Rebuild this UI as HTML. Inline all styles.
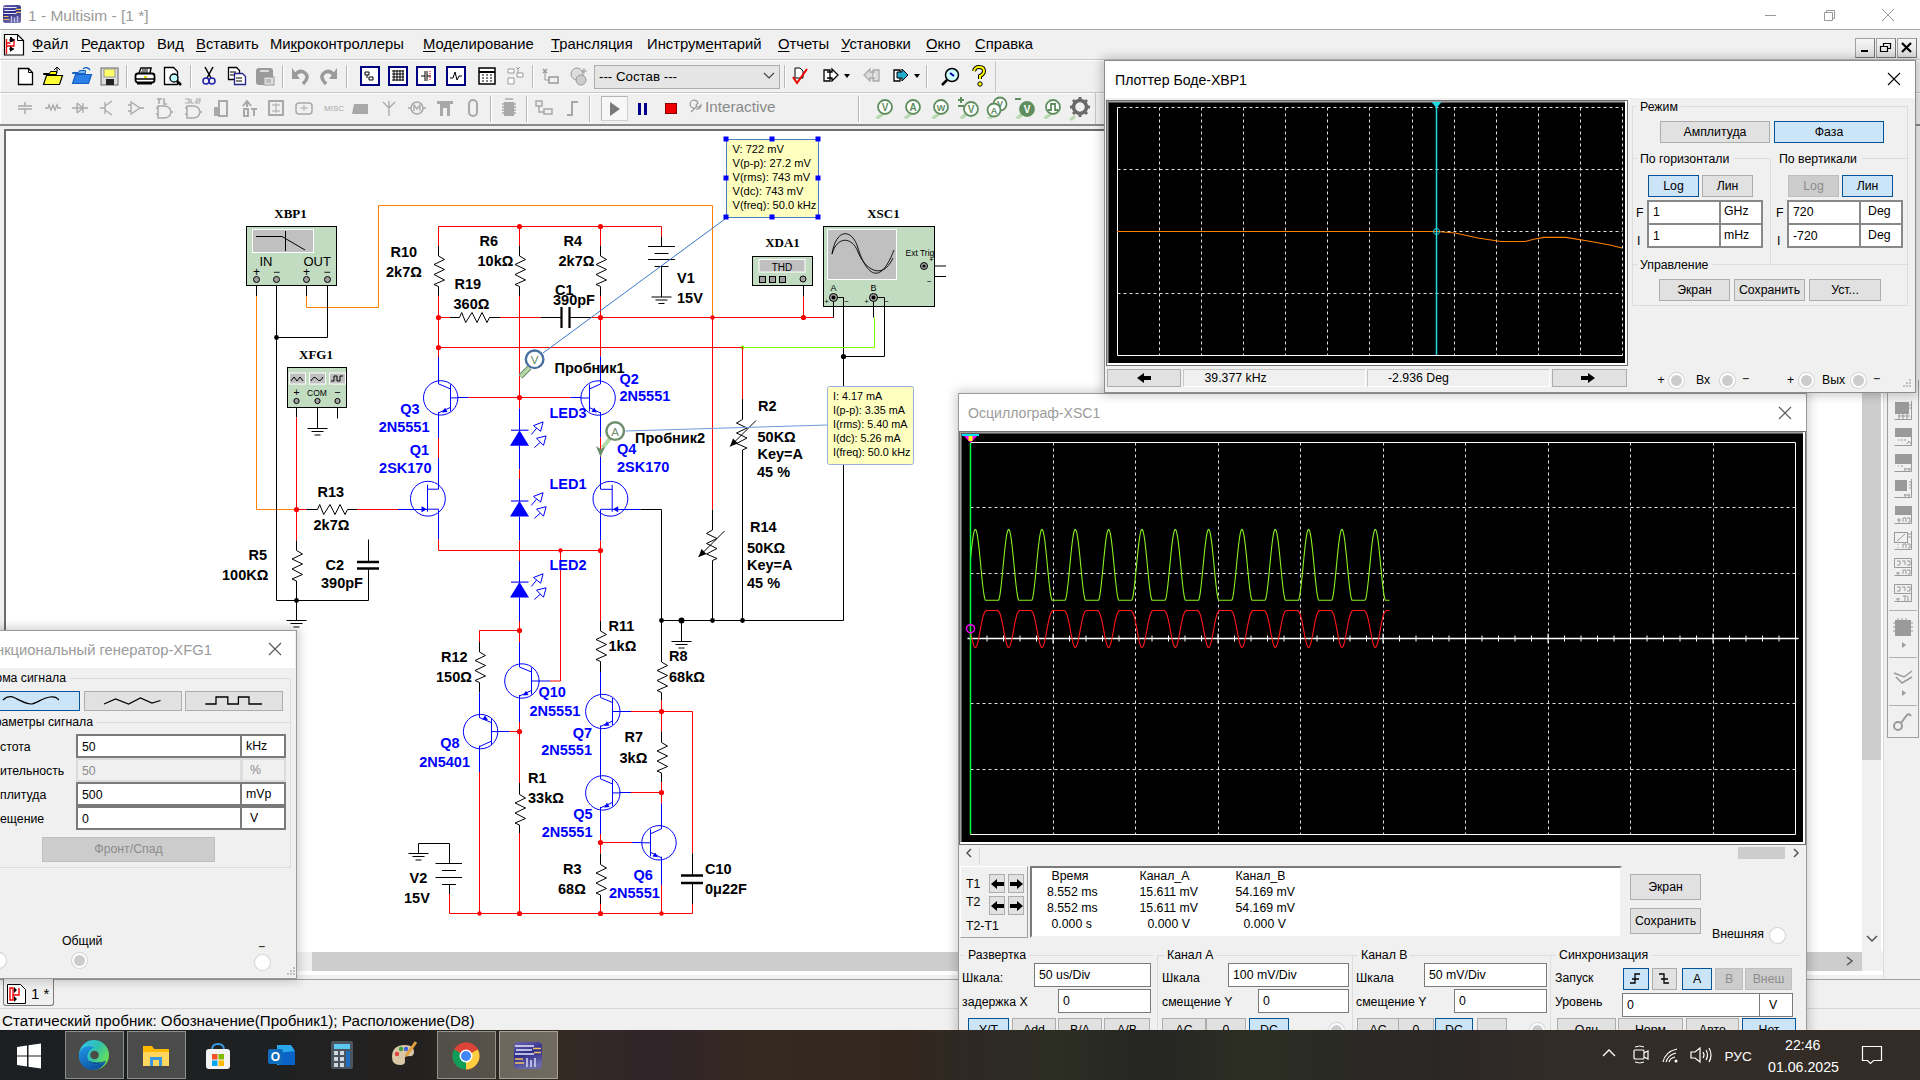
<!DOCTYPE html>
<html><head><meta charset="utf-8">
<style>
*{box-sizing:border-box;margin:0;padding:0}
html,body{width:1920px;height:1080px;overflow:hidden;background:#fff;font-family:"Liberation Sans",sans-serif;color:#000}
.a{position:absolute}
svg.a{overflow:visible}
.t{position:absolute;white-space:nowrap;line-height:1}
.btn{position:absolute;background:#e1e1e1;border:1px solid #adadad}
.sel{position:absolute;background:#cce4f7;border:1px solid #005499}
.dis{position:absolute;background:#cccccc;border:1px solid #bfbfbf}
.tb{position:absolute;background:#fff;border:1px solid #7a7a7a}
.grp{position:absolute;border:1px solid #dcdcdc}
</style></head><body>
<div class="a" style="left:0px;top:0px;width:1920px;height:29px;background:#fff"></div>
<svg class="a" style="left:3px;top:5px;" width="18" height="18" viewBox="0 0 18 18"><defs><linearGradient id="ai" x1="0" y1="0" x2="0.3" y2="1"><stop offset="0" stop-color="#6a68b0"/><stop offset="0.5" stop-color="#2c2a88"/><stop offset="1" stop-color="#6a68a8"/></linearGradient></defs><rect x="0" y="0" width="18" height="18" rx="2.5" fill="url(#ai)"/><path d="M0.5 2.5h13M1.5 5.5h11M0.5 8.5h13" stroke="#e8e8f8" stroke-width="1.1"/><path d="M12.5 4.3h5.5M13 7.3h5" stroke="#f0c060" stroke-width="1.2"/><path d="M0.5 11.5h5M0.5 14.5h6" stroke="#f0c060" stroke-width="1.2"/><path d="M8.5 11v6.5M11.5 12.5v5M14.5 11v6.5" stroke="#c0c0e8" stroke-width="1.3"/></svg>
<div class="t" style="left:28.00px;top:7.90px;font-size:15.5px;color:#9a9a9a">1 - Multisim - [1 *]</div>
<svg class="a" style="left:1761px;top:8px;" width="20" height="14" viewBox="0 0 20 14"><path d="M4 7.5h11" stroke="#999" stroke-width="1"/></svg>
<svg class="a" style="left:1820px;top:6px;" width="18" height="18" viewBox="0 0 18 18"><path d="M4.5 6.5h8v8h-8z M6.5 6.5v-2h8v8h-2" fill="none" stroke="#999" stroke-width="1"/></svg>
<svg class="a" style="left:1879px;top:6px;" width="18" height="18" viewBox="0 0 18 18"><path d="M3 3l12 12M15 3l-12 12" stroke="#999" stroke-width="1"/></svg>
<div class="a" style="left:0px;top:29px;width:1920px;height:1px;background:#a8a8a8"></div>
<div class="a" style="left:0px;top:30px;width:1920px;height:96px;background:#f0f0f0"></div>
<div class="a" style="left:0px;top:30px;width:1px;height:94px;background:#fff"></div>
<div class="a" style="left:0px;top:59px;width:1920px;height:1px;background:#c6c6c6"></div>
<div class="a" style="left:0px;top:60px;width:1920px;height:1px;background:#fff"></div>
<div class="a" style="left:0px;top:92px;width:1920px;height:1px;background:#c6c6c6"></div>
<div class="a" style="left:0px;top:93px;width:1920px;height:1px;background:#fff"></div>
<div class="a" style="left:0px;top:124px;width:1920px;height:2px;background:#8a8a8a"></div>
<svg class="a" style="left:4px;top:34px;" width="21" height="22" viewBox="0 0 21 22"><path d="M0.5 0.5h13l6 6v14.5h-19z" fill="#fff" stroke="#000" stroke-width="1.2"/><path d="M13.5 0.5v6h6" fill="none" stroke="#000"/><path d="M2.5 5v15M2.5 9h4M10 5v7h-7" fill="none" stroke="#e00" stroke-width="1.3"/><path d="M6 3h2v5h-2zM8 4l3 2-3 2zM6 12l4 3-4 3z" fill="#000"/><path d="M5 6h3M10 15h-5" stroke="#000"/></svg>
<div class="t" style="left:32.00px;top:37.49px;font-size:14.8px;text-underline-offset:2px"><u>Ф</u>айл</div>
<div class="t" style="left:81.00px;top:37.49px;font-size:14.8px;text-underline-offset:2px"><u>Р</u>едактор</div>
<div class="t" style="left:157.00px;top:37.49px;font-size:14.8px;text-underline-offset:2px">Вид</div>
<div class="t" style="left:196.00px;top:37.49px;font-size:14.8px;text-underline-offset:2px"><u>В</u>ставить</div>
<div class="t" style="left:270.00px;top:37.49px;font-size:14.8px;text-underline-offset:2px">Ми<u>к</u>роконтроллеры</div>
<div class="t" style="left:423.00px;top:37.49px;font-size:14.8px;text-underline-offset:2px"><u>М</u>оделирование</div>
<div class="t" style="left:551.00px;top:37.49px;font-size:14.8px;text-underline-offset:2px"><u>Т</u>рансляция</div>
<div class="t" style="left:647.00px;top:37.49px;font-size:14.8px;text-underline-offset:2px">Инструм<u>е</u>нтарий</div>
<div class="t" style="left:778.00px;top:37.49px;font-size:14.8px;text-underline-offset:2px"><u>О</u>тчеты</div>
<div class="t" style="left:841.00px;top:37.49px;font-size:14.8px;text-underline-offset:2px"><u>У</u>становки</div>
<div class="t" style="left:926.00px;top:37.49px;font-size:14.8px;text-underline-offset:2px"><u>О</u>кно</div>
<div class="t" style="left:975.00px;top:37.49px;font-size:14.8px;text-underline-offset:2px"><u>С</u>правка</div>
<div class="a" style="left:1855px;top:38px;width:20px;height:20px;background:linear-gradient(#f6f6f6,#e0e0e0);border:1px solid #a0a0a0;border-right-color:#777;border-bottom-color:#777"></div>
<svg class="a" style="left:1855px;top:38px;" width="20" height="20" viewBox="0 0 20 20"><path d="M6 13h7" stroke="#000" stroke-width="2"/></svg>
<div class="a" style="left:1876px;top:38px;width:20px;height:20px;background:linear-gradient(#f6f6f6,#e0e0e0);border:1px solid #a0a0a0;border-right-color:#777;border-bottom-color:#777"></div>
<svg class="a" style="left:1876px;top:38px;" width="20" height="20" viewBox="0 0 20 20"><path d="M4.5 8.5h7v5h-7z M7.5 8.5v-3h7v5h-3" fill="none" stroke="#000" stroke-width="1.2"/></svg>
<div class="a" style="left:1897px;top:38px;width:20px;height:20px;background:linear-gradient(#f6f6f6,#e0e0e0);border:1px solid #a0a0a0;border-right-color:#777;border-bottom-color:#777"></div>
<svg class="a" style="left:1897px;top:38px;" width="20" height="20" viewBox="0 0 20 20"><path d="M5 5l9 9M14 5l-9 9" stroke="#000" stroke-width="2.2"/></svg>
<svg class="a" style="left:17px;top:67px;" width="18" height="19" viewBox="0 0 18 19"><path d="M1.5 1.5h10l4 4v12h-14z" fill="#fff" stroke="#000" stroke-width="1.3"/><path d="M11.5 1.5v4h4" fill="none" stroke="#000"/></svg>
<svg class="a" style="left:42px;top:66px;" width="22" height="20" viewBox="0 0 22 20"><path d="M1.5 7.5h6l1 -2h6v3h-13z" fill="#ff0" stroke="#000"/><path d="M1.5 18.5l3-9h16l-3 9z" fill="#ff3" stroke="#000" stroke-width="1.2"/><path d="M12 4l3-3 3 3M15 1v6" stroke="#000" fill="none"/></svg>
<svg class="a" style="left:71px;top:66px;" width="22" height="20" viewBox="0 0 22 20"><path d="M1.5 6.5h6l1-2h6v3h-13z" fill="#7ab4f5" stroke="#1560c0"/><path d="M1.5 17.5l3-9h16l-3 9z" fill="#2a7fe8" stroke="#1560c0" stroke-width="1.2"/><path d="M12 3q4-3 7 1" stroke="#1560c0" fill="none" stroke-width="1.3"/></svg>
<svg class="a" style="left:100px;top:67px;" width="19" height="19" viewBox="0 0 19 19"><rect x="1" y="1" width="17" height="17" fill="#ddd" stroke="#666"/><rect x="4" y="2" width="11" height="8" fill="#ff6" stroke="#999"/><rect x="6" y="12" width="8" height="6" fill="#222"/></svg>
<div class="a" style="left:126px;top:65px;width:1px;height:23px;background:#b8b8b8"></div>
<div class="a" style="left:127px;top:65px;width:1px;height:23px;background:#fff"></div>
<svg class="a" style="left:134px;top:66px;" width="22" height="20" viewBox="0 0 22 20"><path d="M5 7l2-5h10l-1 5" fill="#fff" stroke="#000" stroke-width="1.5"/><path d="M8 4h6M7 6h7" stroke="#000"/><rect x="1.5" y="7.5" width="19" height="9" rx="2.5" fill="#fff" stroke="#000" stroke-width="1.8"/><path d="M2 13h18" stroke="#000" stroke-width="1.5"/><rect x="10" y="10" width="3" height="2" fill="#dd0"/><rect x="3" y="16" width="15" height="2.5" fill="#000"/></svg>
<svg class="a" style="left:163px;top:66px;" width="20" height="21" viewBox="0 0 20 21"><path d="M1.5 1.5h9l4 4v13h-13z" fill="#fff" stroke="#000" stroke-width="1.3"/><circle cx="11" cy="12" r="4" fill="#bff" stroke="#000" stroke-width="1.3"/><path d="M14 15l4 4" stroke="#000" stroke-width="2.5"/></svg>
<div class="a" style="left:190px;top:65px;width:1px;height:23px;background:#b8b8b8"></div>
<div class="a" style="left:191px;top:65px;width:1px;height:23px;background:#fff"></div>
<svg class="a" style="left:202px;top:66px;" width="14" height="20" viewBox="0 0 14 20"><path d="M3 1l6 11M11 1l-6 11" stroke="#000" stroke-width="1.5"/><circle cx="4" cy="15" r="3" fill="none" stroke="#22a" stroke-width="1.5"/><circle cx="10" cy="15" r="3" fill="none" stroke="#22a" stroke-width="1.5"/></svg>
<svg class="a" style="left:227px;top:66px;" width="20" height="20" viewBox="0 0 20 20"><path d="M1.5 1.5h8l3 3v9h-11z" fill="#fff" stroke="#000" stroke-width="1.3"/><path d="M7.5 7.5h8l3 3v8h-11z" fill="#fff" stroke="#228" stroke-width="1.3"/><path d="M3 6h6M3 9h4M9 12h6M9 15h6" stroke="#000"/></svg>
<svg class="a" style="left:255px;top:66px;" width="20" height="20" viewBox="0 0 20 20"><rect x="1" y="2" width="17" height="17" rx="3" fill="#9a9a9a"/><rect x="5" y="4" width="9" height="2" fill="#ddd"/><rect x="9" y="11" width="10" height="8" fill="#ddd" stroke="#9a9a9a"/><path d="M11 14h5M11 16h5" stroke="#9a9a9a"/></svg>
<div class="a" style="left:282px;top:65px;width:1px;height:23px;background:#b8b8b8"></div>
<div class="a" style="left:283px;top:65px;width:1px;height:23px;background:#fff"></div>
<svg class="a" style="left:290px;top:67px;" width="20" height="18" viewBox="0 0 20 18"><path d="M2 1v11h8z" fill="#9a9a9a"/><path d="M5 8q5-6 10-2t-2 11" fill="none" stroke="#9a9a9a" stroke-width="3.5"/></svg>
<svg class="a" style="left:319px;top:67px;" width="20" height="18" viewBox="0 0 20 18"><path d="M18 1v11h-8z" fill="#9a9a9a"/><path d="M15 8q-5-6-10-2t2 11" fill="none" stroke="#9a9a9a" stroke-width="3.5"/></svg>
<div class="a" style="left:346px;top:65px;width:1px;height:23px;background:#b8b8b8"></div>
<div class="a" style="left:347px;top:65px;width:1px;height:23px;background:#fff"></div>
<svg class="a" style="left:360px;top:66px;" width="20" height="20" viewBox="0 0 20 20"><rect x="1" y="1" width="18" height="18" fill="#fff" stroke="#000080" stroke-width="2"/><path d="M5 6h4v3h-4zM9 11h4v3h-4zM7 9v3" stroke="#000" fill="#fff"/></svg>
<svg class="a" style="left:388px;top:66px;" width="20" height="20" viewBox="0 0 20 20"><rect x="1" y="1" width="18" height="18" fill="#fff" stroke="#000080" stroke-width="2"/><path d="M4 5h12M4 8h12M4 11h12M4 14h12M6 4v11M9 4v11M12 4v11M15 4v11" stroke="#000"/></svg>
<svg class="a" style="left:416px;top:66px;" width="20" height="20" viewBox="0 0 20 20"><rect x="1" y="1" width="18" height="18" fill="#fff" stroke="#000080" stroke-width="2"/><path d="M5 10h4M11 10h4M9 5v10M11 5v10" stroke="#000"/><path d="M14 5v10" stroke="#e00" stroke-dasharray="1 1"/></svg>
<svg class="a" style="left:446px;top:66px;" width="20" height="20" viewBox="0 0 20 20"><rect x="1" y="1" width="18" height="18" fill="#fff" stroke="#000080" stroke-width="2"/><path d="M4 12h3l2-6 2 8 2-4h3" stroke="#000" fill="none"/></svg>
<svg class="a" style="left:477px;top:66px;" width="20" height="20" viewBox="0 0 20 20"><rect x="2" y="2" width="16" height="16" fill="#fff" stroke="#000" stroke-width="1.5"/><path d="M2 6h16" stroke="#000" stroke-width="2"/><path d="M5 9h2M9 9h2M13 9h2M5 12h2M9 12h2M13 12h2M5 15h2M9 15h2M13 15h2" stroke="#000"/></svg>
<svg class="a" style="left:505px;top:66px;" width="20" height="20" viewBox="0 0 20 20"><path d="M3 3h6v4h-6zM3 12h6v6h-6zM12 7h6v4h-6z" fill="#fff" stroke="#999"/><path d="M13 2v5M15 1l-2 2-2-2" stroke="#999" fill="none"/></svg>
<div class="a" style="left:532px;top:65px;width:1px;height:23px;background:#b8b8b8"></div>
<div class="a" style="left:533px;top:65px;width:1px;height:23px;background:#fff"></div>
<svg class="a" style="left:540px;top:66px;" width="20" height="20" viewBox="0 0 20 20"><path d="M3 3l4 4M7 3l-4 4M9 11h9v6h-9z" stroke="#999" fill="none" stroke-width="1.5"/><path d="M5 6v8h4" stroke="#999" fill="none"/></svg>
<svg class="a" style="left:569px;top:66px;" width="20" height="20" viewBox="0 0 20 20"><circle cx="8" cy="8" r="6" fill="#ddd" stroke="#999"/><circle cx="12" cy="14" r="5" fill="#ccc" stroke="#999"/><path d="M15 2v6M12 5h6" stroke="#999"/></svg>
<div class="a" style="left:594px;top:65px;width:186px;height:24px;background:#e5e5e5;border:1px solid #adadad"></div>
<div class="t" style="left:599.00px;top:69.76px;font-size:13.3px;">--- Состав ---</div>
<svg class="a" style="left:762px;top:71px;" width="14" height="10" viewBox="0 0 14 10"><path d="M2 2l5 5 5-5" fill="none" stroke="#444" stroke-width="1.2"/></svg>
<div class="a" style="left:784px;top:65px;width:1px;height:23px;background:#b8b8b8"></div>
<div class="a" style="left:785px;top:65px;width:1px;height:23px;background:#fff"></div>
<svg class="a" style="left:791px;top:66px;" width="20" height="20" viewBox="0 0 20 20"><path d="M4 2h5l3 3v7h-8z" fill="#fff" stroke="#000"/><path d="M2 11l4 6 10-14" fill="none" stroke="#e00" stroke-width="2"/></svg>
<svg class="a" style="left:822px;top:67px;" width="18" height="18" viewBox="0 0 18 18"><path d="M2 3h6v11h-6zM5 5h5v-3l6 6-6 6v-3h-5" fill="#fff" stroke="#000" stroke-width="1.3"/></svg>
<svg class="a" style="left:843px;top:73px;" width="8" height="6" viewBox="0 0 8 6"><path d="M1 1h6l-3 4z" fill="#000"/></svg>
<svg class="a" style="left:863px;top:67px;" width="18" height="18" viewBox="0 0 18 18"><path d="M10 3h6v11h-6zM12 5h-5v-3l-6 6 6 6v-3h5" fill="#ddd" stroke="#aaa" stroke-width="1.3"/></svg>
<svg class="a" style="left:892px;top:67px;" width="18" height="18" viewBox="0 0 18 18"><path d="M2 3h6v11h-6z" fill="#fff" stroke="#000" stroke-width="1.3"/><path d="M5 5h5v-3l6 6-6 6v-3h-5z" fill="#2ac" stroke="#000" stroke-width="1"/></svg>
<svg class="a" style="left:913px;top:73px;" width="8" height="6" viewBox="0 0 8 6"><path d="M1 1h6l-3 4z" fill="#000"/></svg>
<div class="a" style="left:926px;top:65px;width:1px;height:23px;background:#b8b8b8"></div>
<div class="a" style="left:927px;top:65px;width:1px;height:23px;background:#fff"></div>
<svg class="a" style="left:940px;top:66px;" width="22" height="21" viewBox="0 0 22 21"><circle cx="12" cy="9" r="6.5" fill="#cff" stroke="#000" stroke-width="1.5"/><path d="M7 14l-5 5" stroke="#000" stroke-width="2.5"/><path d="M10 7l4 3" stroke="#00a" stroke-width="2"/></svg>
<svg class="a" style="left:970px;top:65px;" width="18" height="23" viewBox="0 0 18 23"><path d="M4 6q1-4 5-4 5 0 5 4 0 3-4 5v3" fill="none" stroke="#000" stroke-width="4"/><path d="M4 6q1-4 5-4 5 0 5 4 0 3-4 5v3" fill="none" stroke="#ff0" stroke-width="2"/><circle cx="10" cy="19" r="2.2" fill="#ff0" stroke="#000"/></svg>
<div class="a" style="left:995px;top:61px;width:1px;height:31px;background:#c8c8c8"></div>
<svg class="a" style="left:15px;top:98px;" width="20" height="20" viewBox="0 0 20 20"><path d="M3 8h14M3 11h14M10 4v4M10 11v5" stroke="#a8a8a8" stroke-width="1.5"/></svg>
<svg class="a" style="left:43px;top:98px;" width="20" height="20" viewBox="0 0 20 20"><path d="M2 10h3l1-3 2 5 2-5 2 5 2-5 1 3h3" stroke="#a8a8a8" fill="none" stroke-width="1.3"/></svg>
<svg class="a" style="left:70px;top:98px;" width="20" height="20" viewBox="0 0 20 20"><path d="M2 10h16M7 5v10M7 5l6 5-6 5M13 5v10" stroke="#a8a8a8" fill="none" stroke-width="1.3"/></svg>
<svg class="a" style="left:98px;top:98px;" width="20" height="20" viewBox="0 0 20 20"><path d="M7 4v12M7 8l7-5M7 12l7 5M2 10h5" stroke="#a8a8a8" fill="none" stroke-width="1.3"/></svg>
<svg class="a" style="left:126px;top:98px;" width="20" height="20" viewBox="0 0 20 20"><path d="M5 4v12l9-6zM2 7h3M2 13h3M14 10h4" stroke="#a8a8a8" fill="none" stroke-width="1.3"/></svg>
<svg class="a" style="left:154px;top:98px;" width="20" height="20" viewBox="0 0 20 20"><path d="M4 8h6q6 0 7 6q-1 6-7 6h-6zM2 10h2M2 16h2M17 14h2" stroke="#a8a8a8" fill="none" stroke-width="1.5"/><path d="M3 1h5M5 1v5M9 1h1v5h3" stroke="#a8a8a8" stroke-width="1.5" fill="none"/></svg>
<svg class="a" style="left:183px;top:98px;" width="20" height="20" viewBox="0 0 20 20"><path d="M4 8h6q6 0 7 6q-1 6-7 6h-6zM2 10h2M2 16h2M17 14h2" stroke="#a8a8a8" fill="none" stroke-width="1.5"/><path d="M2 1h4v4h-4M8 1v4h3M13 1h4v2h-4v2h4" stroke="#a8a8a8" stroke-width="1.2" fill="none"/></svg>
<svg class="a" style="left:211px;top:98px;" width="20" height="20" viewBox="0 0 20 20"><rect x="3" y="9" width="4" height="9" fill="#a8a8a8"/><rect x="8" y="3" width="8" height="15" fill="none" stroke="#a8a8a8" stroke-width="2"/></svg>
<svg class="a" style="left:239px;top:98px;" width="20" height="20" viewBox="0 0 20 20"><path d="M4 8l4-5 4 5M8 3v6M5 11h4v7h-4zM12 11h6M15 11v7" stroke="#a8a8a8" fill="none" stroke-width="2"/></svg>
<svg class="a" style="left:266px;top:98px;" width="20" height="20" viewBox="0 0 20 20"><rect x="3" y="3" width="14" height="14" fill="none" stroke="#a8a8a8" stroke-width="2"/><path d="M6 7h8M6 13h8M10 5v10" stroke="#a8a8a8"/></svg>
<svg class="a" style="left:294px;top:98px;" width="20" height="20" viewBox="0 0 20 20"><rect x="2" y="5" width="16" height="11" rx="3" fill="none" stroke="#a8a8a8" stroke-width="1.5"/><path d="M6 10h8M10 7v6" stroke="#a8a8a8"/></svg>
<svg class="a" style="left:323px;top:98px;" width="20" height="20" viewBox="0 0 20 20"><text x="1" y="13" font-size="8" font-family="Liberation Sans" fill="#a8a8a8">MISC</text></svg>
<svg class="a" style="left:351px;top:98px;" width="20" height="20" viewBox="0 0 20 20"><path d="M3 6h14v10h-16z" fill="#a8a8a8"/></svg>
<svg class="a" style="left:379px;top:98px;" width="20" height="20" viewBox="0 0 20 20"><path d="M10 3v15M4 4l6 6 6-6" stroke="#a8a8a8" fill="none" stroke-width="1.3"/></svg>
<svg class="a" style="left:407px;top:98px;" width="20" height="20" viewBox="0 0 20 20"><circle cx="10" cy="10" r="6" fill="none" stroke="#a8a8a8" stroke-width="1.5"/><path d="M1 10h3M16 10h3M7 13v-6l3 4 3-4v6" stroke="#a8a8a8" fill="none" stroke-width="1.3"/></svg>
<svg class="a" style="left:435px;top:98px;" width="20" height="20" viewBox="0 0 20 20"><path d="M2 3h16v3h-3v12h-3v-8h-4v8h-3v-12h-3z" fill="#a8a8a8"/></svg>
<svg class="a" style="left:463px;top:98px;" width="20" height="20" viewBox="0 0 20 20"><rect x="6" y="2" width="8" height="16" rx="4" fill="none" stroke="#a8a8a8" stroke-width="2"/></svg>
<svg class="a" style="left:499px;top:98px;" width="20" height="20" viewBox="0 0 20 20"><rect x="5" y="4" width="10" height="14" fill="#a8a8a8"/><path d="M3 6h2M3 9h2M3 12h2M3 15h2M15 6h2M15 9h2M15 12h2M15 15h2M6 1h8" stroke="#a8a8a8" stroke-width="1.5"/></svg>
<svg class="a" style="left:534px;top:98px;" width="20" height="20" viewBox="0 0 20 20"><path d="M2 3h6v5h-6zM10 11h8v5h-8zM5 8v6h5" stroke="#a8a8a8" fill="none" stroke-width="1.5"/></svg>
<svg class="a" style="left:563px;top:98px;" width="20" height="20" viewBox="0 0 20 20"><path d="M4 17h5v-13h6" stroke="#a8a8a8" fill="none" stroke-width="2"/></svg>
<div class="a" style="left:490px;top:96px;width:1px;height:26px;background:#b8b8b8"></div>
<div class="a" style="left:491px;top:96px;width:1px;height:26px;background:#fff"></div>
<div class="a" style="left:526px;top:96px;width:1px;height:26px;background:#b8b8b8"></div>
<div class="a" style="left:527px;top:96px;width:1px;height:26px;background:#fff"></div>
<div class="a" style="left:589px;top:96px;width:1px;height:26px;background:#b8b8b8"></div>
<div class="a" style="left:590px;top:96px;width:1px;height:26px;background:#fff"></div>
<div class="a" style="left:601px;top:96px;width:27px;height:25px;background:#f7f7f7;border:1px solid #cfcfcf;border-top-color:#b5b5b5;border-left-color:#b5b5b5"></div>
<svg class="a" style="left:609px;top:101px;" width="12" height="16" viewBox="0 0 12 16"><path d="M1 1l10 7-10 7z" fill="#7a7a7a"/></svg>
<svg class="a" style="left:637px;top:101px;" width="12" height="16" viewBox="0 0 12 16"><rect x="1" y="2" width="3" height="12" fill="#00008a"/><rect x="7" y="2" width="3" height="12" fill="#00008a"/></svg>
<div class="a" style="left:665px;top:103px;width:12px;height:11px;background:#e00;border:1px solid #800"></div>
<svg class="a" style="left:688px;top:99px;" width="14" height="16" viewBox="0 0 14 16"><path d="M3 13l5-5M7 9a4 4 0 1 1 3 -5l-2 2 1 2 2 0 2-2a4 4 0 0 1-5 4" fill="none" stroke="#999" stroke-width="1.2"/></svg>
<div class="t" style="left:705.00px;top:99.07px;font-size:15.3px;color:#8a8a8a">Interactive</div>
<div class="a" style="left:858px;top:96px;width:1px;height:26px;background:#b8b8b8"></div>
<div class="a" style="left:859px;top:96px;width:1px;height:26px;background:#fff"></div>
<svg class="a" style="left:872px;top:94px;" width="26" height="28" viewBox="0 0 26 28"><path d="M3 24l6-5 3 2-5 4z" fill="#b8d8b0"/><circle cx="13" cy="13" r="7" fill="#fff" stroke="#5e8e5e" stroke-width="1.8"/><text x="13" y="17" text-anchor="middle" font-size="10" font-weight="bold" font-family="Liberation Sans" fill="#5e8e5e">V</text></svg>
<svg class="a" style="left:900px;top:94px;" width="26" height="28" viewBox="0 0 26 28"><path d="M3 24l6-5 3 2-5 4z" fill="#b8d8b0"/><circle cx="13" cy="13" r="7" fill="#fff" stroke="#5e8e5e" stroke-width="1.8"/><text x="13" y="17" text-anchor="middle" font-size="10" font-weight="bold" font-family="Liberation Sans" fill="#5e8e5e">A</text></svg>
<svg class="a" style="left:928px;top:94px;" width="26" height="28" viewBox="0 0 26 28"><path d="M3 24l6-5 3 2-5 4z" fill="#b8d8b0"/><circle cx="13" cy="13" r="7" fill="#fff" stroke="#5e8e5e" stroke-width="1.8"/><text x="13" y="17" text-anchor="middle" font-size="9" font-weight="bold" font-family="Liberation Sans" fill="#5e8e5e">W</text></svg>
<svg class="a" style="left:956px;top:94px;" width="26" height="28" viewBox="0 0 26 28"><path d="M3 24l6-5 3 2-5 4z" fill="#b8d8b0"/><path d="M2 6h6M5 3v6M2 12h6" stroke="#5e8e5e" stroke-width="2"/><circle cx="15" cy="15" r="7" fill="#fff" stroke="#5e8e5e" stroke-width="1.8"/><text x="15" y="19" text-anchor="middle" font-size="10" font-weight="bold" font-family="Liberation Sans" fill="#5e8e5e">V</text></svg>
<svg class="a" style="left:984px;top:94px;" width="26" height="28" viewBox="0 0 26 28"><path d="M3 24l6-5 3 2-5 4z" fill="#b8d8b0"/><circle cx="16" cy="10" r="6.5" fill="#fff" stroke="#5e8e5e" stroke-width="1.8"/><text x="16" y="13" text-anchor="middle" font-size="9" font-weight="bold" font-family="Liberation Sans" fill="#5e8e5e">V</text><circle cx="10" cy="16" r="6.5" fill="#fff" stroke="#5e8e5e" stroke-width="1.8"/><text x="10" y="20" text-anchor="middle" font-size="9" font-weight="bold" font-family="Liberation Sans" fill="#5e8e5e">A</text></svg>
<svg class="a" style="left:1012px;top:94px;" width="26" height="28" viewBox="0 0 26 28"><path d="M3 24l6-5 3 2-5 4z" fill="#b8d8b0"/><path d="M3 5h6" stroke="#5e8e5e" stroke-width="2"/><circle cx="15" cy="15" r="7" fill="#5e8e5e" stroke="#5e8e5e" stroke-width="1.8"/><text x="15" y="19" text-anchor="middle" font-size="10" font-weight="bold" font-family="Liberation Sans" fill="#fff">V</text></svg>
<svg class="a" style="left:1040px;top:94px;" width="26" height="28" viewBox="0 0 26 28"><path d="M3 24l6-5 3 2-5 4z" fill="#b8d8b0"/><circle cx="13" cy="13" r="7" fill="#fff" stroke="#5e8e5e" stroke-width="1.8"/><path d="M8 16h3v-6h4v6h3" fill="none" stroke="#5e8e5e" stroke-width="1.8"/></svg>
<svg class="a" style="left:1066px;top:95px;" width="26" height="26" viewBox="0 0 26 26"><path d="M3 24l5-4 2 2-4 4z" fill="#b8d8b0"/><circle cx="14" cy="12" r="6.5" fill="none" stroke="#6a6a6a" stroke-width="3.5"/><path d="M14 2v4M14 18v4M4 12h4M20 12h4M7 5l3 3M18 16l3 3M21 5l-3 3M10 16l-3 3" stroke="#6a6a6a" stroke-width="3"/></svg>
<div class="a" style="left:1095px;top:93px;width:1px;height:31px;background:#c8c8c8"></div>
<div class="a" style="left:0px;top:126px;width:1920px;height:854px;background:#f0f0f0"></div>
<div class="a" style="left:4px;top:129px;width:1880px;height:846px;background:#fff;border-left:2px solid #6d6d6d;border-top:2px solid #6d6d6d"></div>
<div class="a" style="left:1862px;top:131px;width:19px;height:820px;background:#f0f0f0"></div>
<div class="a" style="left:1862px;top:131px;width:19px;height:629px;background:#cdcdcd"></div>
<svg class="a" style="left:1865px;top:933px;" width="14" height="12" viewBox="0 0 14 12"><path d="M2 3l5 5 5-5" fill="none" stroke="#555" stroke-width="1.5"/></svg>
<div class="a" style="left:6px;top:952px;width:1856px;height:19px;background:#f0f0f0"></div>
<div class="a" style="left:312px;top:952px;width:1550px;height:19px;background:#cdcdcd"></div>
<svg class="a" style="left:1844px;top:955px;" width="12" height="12" viewBox="0 0 12 12"><path d="M3 2l5 4-5 4" fill="none" stroke="#555" stroke-width="1.5"/></svg>
<div class="a" style="left:1862px;top:951px;width:22px;height:20px;background:#f0f0f0"></div>
<div class="a" style="left:1883px;top:126px;width:1px;height:854px;background:#dcdcdc"></div>
<div class="a" style="left:1887px;top:380px;width:32px;height:358px;background:#f0f0f0;border:1px solid #a0a0a0;border-top:none"></div>
<svg class="a" style="left:1893px;top:401px;" width="21" height="21" viewBox="0 0 21 21"><rect x="2" y="1" width="14" height="12" fill="#9a9a9a"/><path d="M18.5 0v18.5H1.5M16 4h2M16 7h2M5 15h12M6 13v5M10 13v5M14 13v5" stroke="#9a9a9a" fill="none"/></svg>
<svg class="a" style="left:1893px;top:427px;" width="21" height="21" viewBox="0 0 21 21"><rect x="2" y="1" width="17" height="9" fill="#9a9a9a"/><path d="M18.5 10v8.5H1.5M6 12v2M9 12v2M12 12v2M14 17l2-3 2 3" stroke="#9a9a9a" fill="none"/></svg>
<svg class="a" style="left:1893px;top:453px;" width="21" height="21" viewBox="0 0 21 21"><rect x="2" y="1" width="17" height="10" fill="#9a9a9a"/><path d="M18.5 11v7.5H1.5M5 13h1M8 13h2M11 16h7M12 15v4M16 15v4" stroke="#9a9a9a" fill="none"/></svg>
<svg class="a" style="left:1893px;top:479px;" width="21" height="21" viewBox="0 0 21 21"><rect x="2" y="1" width="12" height="11" fill="#9a9a9a"/><path d="M18.5 0v18.5H1.5M16 3h2M16 6h2M16 9h2M11 16h6M12 15v4M16 15v4" stroke="#9a9a9a" fill="none"/></svg>
<svg class="a" style="left:1893px;top:505px;" width="21" height="21" viewBox="0 0 21 21"><rect x="2" y="1" width="17" height="9" fill="#9a9a9a"/><path d="M18.5 10v8.5H1.5M6 13v5M4 15h4M10 17v-4h3v4M14 13h3v4h-2" stroke="#9a9a9a" fill="none"/></svg>
<svg class="a" style="left:1893px;top:531px;" width="21" height="21" viewBox="0 0 21 21"><rect x="1.5" y="1.5" width="13" height="10" fill="none" stroke="#9a9a9a"/><path d="M4 10l8-7M18.5 0v18.5H1.5M15 3h3M15 6h3M10 17v-4h3v4M14 13h3v4h-2M5 13v1M5 16v1" stroke="#9a9a9a" fill="none"/></svg>
<svg class="a" style="left:1893px;top:557px;" width="21" height="21" viewBox="0 0 21 21"><path d="M1.5 1.5h17v9h-17zM4 4h3v4h-3M9 4h3v4M14 4h3v4h-3M18.5 10v8.5H1.5M5 15v3M3 16h4M10 17v-4h3v4M14 13h3v4h-2" stroke="#9a9a9a" fill="none"/></svg>
<svg class="a" style="left:1893px;top:583px;" width="21" height="21" viewBox="0 0 21 21"><path d="M1.5 1.5h17v9h-17zM4 4h3v4h-3M9 4h3v4M14 4h3v4h-3M18.5 10v8.5H1.5M5 15v3M3 16h4M10 13h4M12 13v5M15 13v5" stroke="#9a9a9a" fill="none"/></svg>
<div class="a" style="left:1889px;top:610px;width:28px;height:1px;background:#b0b0b0"></div>
<svg class="a" style="left:1892px;top:617px;" width="22" height="22" viewBox="0 0 22 22"><rect x="3" y="3" width="16" height="16" fill="#9a9a9a"/><path d="M1 6h2M1 10h2M1 14h2M19 6h2M19 10h2M19 14h2M6 1v2M10 1v2M14 1v2" stroke="#9a9a9a"/></svg>
<svg class="a" style="left:1900px;top:641px;" width="8" height="8" viewBox="0 0 8 8"><path d="M2 1l4 3-4 3z" fill="#9a9a9a"/></svg>
<div class="a" style="left:1889px;top:657px;width:28px;height:1px;background:#b0b0b0"></div>
<svg class="a" style="left:1892px;top:665px;" width="22" height="22" viewBox="0 0 22 22"><path d="M2 8l10 4 8-6M4 12l6 6 10-6" fill="none" stroke="#9a9a9a" stroke-width="1.5"/></svg>
<svg class="a" style="left:1900px;top:689px;" width="8" height="8" viewBox="0 0 8 8"><path d="M2 1l4 3-4 3z" fill="#9a9a9a"/></svg>
<div class="a" style="left:1889px;top:705px;width:28px;height:1px;background:#b0b0b0"></div>
<svg class="a" style="left:1892px;top:711px;" width="22" height="22" viewBox="0 0 22 22"><circle cx="6" cy="15" r="4" fill="none" stroke="#9a9a9a" stroke-width="2"/><path d="M9 12l6-8q2-2 4 1" fill="none" stroke="#9a9a9a" stroke-width="2"/></svg>
<svg class="a" style="left:1867px;top:985px;" width="18" height="18" viewBox="0 0 18 18"><rect x="2" y="5" width="10" height="9" fill="#fff" stroke="#00a" stroke-width="1.5"/><rect x="6" y="2" width="10" height="9" fill="none" stroke="#00a" stroke-width="1.5"/></svg>
<div class="a" style="left:1860px;top:1013px;width:6px;height:14px;background:#3c3"></div>
<div class="a" style="left:1868px;top:1013px;width:6px;height:14px;background:#3c3"></div>
<div class="a" style="left:1876px;top:1013px;width:6px;height:14px;background:#ddd"></div>
<div class="a" style="left:1884px;top:1013px;width:6px;height:14px;background:#ddd"></div>
<div class="a" style="left:1892px;top:1013px;width:6px;height:14px;background:#ddd"></div>
<div class="a" style="left:1900px;top:1013px;width:6px;height:14px;background:#3c3"></div>
<div class="a" style="left:1908px;top:1013px;width:6px;height:14px;background:#3c3"></div>
<svg class="a" style="left:0;top:0" width="1920" height="1080" viewBox="0 0 1920 1080"><polyline points="256.5,296 256.5,509.5 296.5,509.5" fill="none" stroke="#ff8000" stroke-width="1"/><polyline points="306.5,296 306.5,307.5 378.5,307.5 378.5,205.5 712.5,205.5 712.5,317.5" fill="none" stroke="#ff8000" stroke-width="1"/><line x1="256.5" y1="283" x2="256.5" y2="296" stroke="#000000" stroke-width="1"/><line x1="306.5" y1="283" x2="306.5" y2="296" stroke="#000000" stroke-width="1"/><polyline points="276.5,283 276.5,600.5 368.5,600.5 368.5,568.5" fill="none" stroke="#000000" stroke-width="1"/><polyline points="327.5,283 327.5,337.5 276.5,337.5" fill="none" stroke="#000000" stroke-width="1"/><circle cx="276.5" cy="337.5" r="2.4" fill="#000000"/><line x1="296.5" y1="404" x2="296.5" y2="417.5" stroke="#000000" stroke-width="1"/><line x1="317.5" y1="404" x2="317.5" y2="428.5" stroke="#000000" stroke-width="1"/><line x1="337.5" y1="404" x2="337.5" y2="418.5" stroke="#000000" stroke-width="1"/><line x1="307.5" y1="428.5" x2="327.5" y2="428.5" stroke="#000000" stroke-width="1"/><line x1="311.5" y1="431.5" x2="323.5" y2="431.5" stroke="#000000" stroke-width="1"/><line x1="314.5" y1="435.0" x2="320.5" y2="435.0" stroke="#000000" stroke-width="1"/><line x1="296.5" y1="417.5" x2="296.5" y2="540.5" stroke="#ff0000" stroke-width="1"/><line x1="296.5" y1="540.5" x2="296.5" y2="550.5" stroke="#000000" stroke-width="1"/><polyline points="296.5,550.5 302.5,554.0 292.0,559.0 302.5,564.0 292.0,569.0 302.5,574.5 292.0,579.0 296.5,581.0" fill="none" stroke="#000000" stroke-width="1"/><line x1="296.5" y1="581" x2="296.5" y2="620.5" stroke="#000000" stroke-width="1"/><circle cx="296.5" cy="600.5" r="2.4" fill="#000000"/><line x1="286.5" y1="620.5" x2="306.5" y2="620.5" stroke="#000000" stroke-width="1"/><line x1="290.5" y1="623.5" x2="302.5" y2="623.5" stroke="#000000" stroke-width="1"/><line x1="293.5" y1="627.0" x2="299.5" y2="627.0" stroke="#000000" stroke-width="1"/><line x1="368.5" y1="539.5" x2="368.5" y2="562" stroke="#000000" stroke-width="1"/><line x1="357" y1="562" x2="379" y2="562" stroke="#000000" stroke-width="2.5"/><line x1="357" y1="568.5" x2="379" y2="568.5" stroke="#000000" stroke-width="2.5"/><circle cx="296.5" cy="509.5" r="2.6" fill="#ff0000"/><line x1="296.5" y1="509.5" x2="306.5" y2="509.5" stroke="#ff0000" stroke-width="1"/><line x1="306.5" y1="509.5" x2="317.5" y2="509.5" stroke="#000000" stroke-width="1"/><polyline points="317.5,509.5 319.7,504.5 323.7,514.5 330.0,504.5 335.0,514.5 340.0,504.5 345.0,514.5 347.5,509.5" fill="none" stroke="#000000" stroke-width="1"/><line x1="347.5" y1="509.5" x2="357" y2="509.5" stroke="#000000" stroke-width="1"/><line x1="357" y1="509.5" x2="398" y2="509.5" stroke="#ff0000" stroke-width="1"/><line x1="398" y1="509.5" x2="427.4" y2="509.5" stroke="#0000ff" stroke-width="1"/><polyline points="438.5,246 438.5,226.5 661.5,226.5 661.5,237" fill="none" stroke="#ff0000" stroke-width="1"/><line x1="661.5" y1="237" x2="661.5" y2="246.5" stroke="#000000" stroke-width="1"/><circle cx="519.5" cy="226.5" r="2.6" fill="#ff0000"/><circle cx="600.5" cy="226.5" r="2.6" fill="#ff0000"/><line x1="519.5" y1="226.5" x2="519.5" y2="246" stroke="#ff0000" stroke-width="1"/><line x1="600.5" y1="226.5" x2="600.5" y2="246" stroke="#ff0000" stroke-width="1"/><line x1="438.5" y1="246" x2="438.5" y2="256" stroke="#000000" stroke-width="1"/><polyline points="438.5,256 444.5,259.5 434.0,264.5 444.5,269.5 434.0,274.5 444.5,280 434.0,284.5 438.5,286.5" fill="none" stroke="#000000" stroke-width="1"/><line x1="438.5" y1="286.5" x2="438.5" y2="296" stroke="#000000" stroke-width="1"/><line x1="519.5" y1="246" x2="519.5" y2="256" stroke="#000000" stroke-width="1"/><polyline points="519.5,256 525.5,259.5 515.0,264.5 525.5,269.5 515.0,274.5 525.5,280 515.0,284.5 519.5,286.5" fill="none" stroke="#000000" stroke-width="1"/><line x1="519.5" y1="286.5" x2="519.5" y2="296" stroke="#000000" stroke-width="1"/><line x1="600.5" y1="246" x2="600.5" y2="256" stroke="#000000" stroke-width="1"/><polyline points="600.5,256 606.5,259.5 596.0,264.5 606.5,269.5 596.0,274.5 606.5,280 596.0,284.5 600.5,286.5" fill="none" stroke="#000000" stroke-width="1"/><line x1="600.5" y1="286.5" x2="600.5" y2="296" stroke="#000000" stroke-width="1"/><line x1="438.5" y1="296" x2="438.5" y2="357" stroke="#ff0000" stroke-width="1"/><circle cx="438.5" cy="317.5" r="2.6" fill="#ff0000"/><circle cx="438.5" cy="347.5" r="2.6" fill="#ff0000"/><line x1="519.5" y1="296" x2="519.5" y2="408.5" stroke="#ff0000" stroke-width="1"/><line x1="600.5" y1="296" x2="600.5" y2="356.5" stroke="#ff0000" stroke-width="1"/><line x1="648" y1="246.5" x2="675" y2="246.5" stroke="#000000" stroke-width="1"/><line x1="654.5" y1="253.5" x2="668.5" y2="253.5" stroke="#000000" stroke-width="1"/><line x1="648" y1="259.5" x2="675" y2="259.5" stroke="#000000" stroke-width="1"/><line x1="654.5" y1="266.5" x2="668.5" y2="266.5" stroke="#000000" stroke-width="1"/><line x1="661.5" y1="266.5" x2="661.5" y2="297" stroke="#000000" stroke-width="1"/><line x1="651.5" y1="297" x2="671.5" y2="297" stroke="#000000" stroke-width="1"/><line x1="655.5" y1="300" x2="667.5" y2="300" stroke="#000000" stroke-width="1"/><line x1="658.5" y1="303.5" x2="664.5" y2="303.5" stroke="#000000" stroke-width="1"/><line x1="438.5" y1="317.5" x2="450" y2="317.5" stroke="#ff0000" stroke-width="1"/><line x1="450" y1="317.5" x2="459.5" y2="317.5" stroke="#000000" stroke-width="1"/><polyline points="459.5,317.5 461.7,312.5 465.7,322.5 472.0,312.5 477.0,322.5 482.0,312.5 487.0,322.5 489.5,317.5" fill="none" stroke="#000000" stroke-width="1"/><line x1="489.5" y1="317.5" x2="500" y2="317.5" stroke="#000000" stroke-width="1"/><line x1="500" y1="317.5" x2="541" y2="317.5" stroke="#ff0000" stroke-width="1"/><line x1="541" y1="317.5" x2="561.5" y2="317.5" stroke="#000000" stroke-width="1"/><line x1="561.5" y1="307" x2="561.5" y2="328" stroke="#000000" stroke-width="2.2"/><line x1="569.5" y1="307" x2="569.5" y2="328" stroke="#000000" stroke-width="2.2"/><line x1="569.5" y1="317.5" x2="591.5" y2="317.5" stroke="#000000" stroke-width="1"/><line x1="591.5" y1="317.5" x2="833.5" y2="317.5" stroke="#ff0000" stroke-width="1"/><circle cx="600.5" cy="317.5" r="2.6" fill="#ff0000"/><circle cx="712.5" cy="317.5" r="2.2" fill="#ff0000"/><circle cx="803.5" cy="317.5" r="2.6" fill="#ff0000"/><line x1="803.5" y1="317.5" x2="803.5" y2="296.5" stroke="#ff0000" stroke-width="1"/><line x1="803.5" y1="296.5" x2="803.5" y2="282" stroke="#000000" stroke-width="1"/><line x1="843.5" y1="306" x2="843.5" y2="620.5" stroke="#000000" stroke-width="1"/><polyline points="874.5,317.5 874.5,347.5 742.5,347.5" fill="none" stroke="#80ff00" stroke-width="1"/><circle cx="742.5" cy="347.5" r="2" fill="#80ff00"/><polyline points="884.5,306 884.5,356.5 843.5,356.5" fill="none" stroke="#000000" stroke-width="1"/><circle cx="843.5" cy="356.5" r="2.6" fill="#000000"/><line x1="926" y1="266" x2="946" y2="266" stroke="#000000" stroke-width="1"/><polyline points="924,269 924,276.5 946,276.5" fill="none" stroke="#000000" stroke-width="1"/><line x1="438.5" y1="347.5" x2="742.5" y2="347.5" stroke="#ff0000" stroke-width="1"/><line x1="742.5" y1="347.5" x2="742.5" y2="399" stroke="#ff0000" stroke-width="1"/><line x1="742.5" y1="399" x2="742.5" y2="419.5" stroke="#000000" stroke-width="1"/><polyline points="742.5,419.5 736.5,423.0 747.0,428.0 736.5,433.0 747.0,438.0 736.5,443.5 747.0,448.0 742.5,450.0" fill="none" stroke="#000000" stroke-width="1"/><line x1="742.5" y1="450" x2="742.5" y2="620.5" stroke="#000000" stroke-width="1"/><line x1="712.5" y1="317.5" x2="712.5" y2="509.5" stroke="#ff0000" stroke-width="1"/><line x1="712.5" y1="509.5" x2="712.5" y2="530" stroke="#000000" stroke-width="1"/><polyline points="712.5,530 706.5,533.5 717.0,538.5 706.5,543.5 717.0,548.5 706.5,554 717.0,558.5 712.5,560.5" fill="none" stroke="#000000" stroke-width="1"/><line x1="712.5" y1="560.5" x2="712.5" y2="620.5" stroke="#000000" stroke-width="1"/><line x1="756" y1="420.5" x2="730" y2="446.5" stroke="#000000" stroke-width="1"/><polygon points="730,446.5 733,438.5 738,443.5" fill="#000000"/><line x1="724.5" y1="531" x2="698.5" y2="557" stroke="#000000" stroke-width="1"/><polygon points="698.5,557 701.5,549 706.5,554" fill="#000000"/><line x1="661.5" y1="620.5" x2="843.5" y2="620.5" stroke="#000000" stroke-width="1"/><circle cx="661.5" cy="620.5" r="2.4" fill="#000000"/><circle cx="712.5" cy="620.5" r="2.4" fill="#000000"/><circle cx="742.5" cy="620.5" r="2.4" fill="#000000"/><circle cx="681.5" cy="620.5" r="3" fill="#000000"/><line x1="681.5" y1="620.5" x2="681.5" y2="641.5" stroke="#000000" stroke-width="1"/><line x1="671.5" y1="641.5" x2="691.5" y2="641.5" stroke="#000000" stroke-width="1"/><line x1="675.5" y1="644.5" x2="687.5" y2="644.5" stroke="#000000" stroke-width="1"/><line x1="678.5" y1="648.0" x2="684.5" y2="648.0" stroke="#000000" stroke-width="1"/><line x1="438.5" y1="357" x2="438.5" y2="381" stroke="#0000ff" stroke-width="1"/><circle cx="440.7" cy="397.9" r="17.2" fill="none" stroke="#0000ff"/><line x1="450.5" y1="384.4" x2="450.5" y2="411.4" stroke="#0000ff" stroke-width="1"/><line x1="450.5" y1="397.9" x2="458.2" y2="397.9" stroke="#0000ff" stroke-width="1"/><line x1="438.5" y1="380.4" x2="438.5" y2="383.9" stroke="#0000ff" stroke-width="1"/><line x1="438.5" y1="411.9" x2="438.5" y2="415.4" stroke="#0000ff" stroke-width="1"/><line x1="450.5" y1="388.9" x2="438.5" y2="383.9" stroke="#0000ff" stroke-width="1"/><line x1="450.5" y1="407.4" x2="438.5" y2="412.9" stroke="#0000ff" stroke-width="1"/><polygon points="442.0,412.4 445.0,407.7 447.6,412.0" fill="#0000ff"/><line x1="438.5" y1="414" x2="438.5" y2="438" stroke="#0000ff" stroke-width="1"/><line x1="438.5" y1="438" x2="438.5" y2="458" stroke="#ff0000" stroke-width="1"/><line x1="438.5" y1="458" x2="438.5" y2="489.3" stroke="#0000ff" stroke-width="1"/><circle cx="427.9" cy="498.7" r="17.4" fill="none" stroke="#0000ff"/><line x1="427.5" y1="484.7" x2="427.5" y2="511.7" stroke="#0000ff" stroke-width="1"/><line x1="427.5" y1="489.2" x2="438.5" y2="489.2" stroke="#0000ff" stroke-width="1"/><line x1="427.5" y1="509.2" x2="438.5" y2="509.2" stroke="#0000ff" stroke-width="1"/><polygon points="427.0,509.2 421.5,506.2 421.5,512.2" fill="#0000ff"/><line x1="438.5" y1="509.3" x2="438.5" y2="539.5" stroke="#0000ff" stroke-width="1"/><line x1="438.5" y1="539.5" x2="438.5" y2="550.5" stroke="#ff0000" stroke-width="1"/><line x1="458" y1="397.5" x2="468.5" y2="397.5" stroke="#0000ff" stroke-width="1"/><line x1="468.5" y1="397.5" x2="570.5" y2="397.5" stroke="#ff0000" stroke-width="1"/><line x1="570.5" y1="397.5" x2="581" y2="397.5" stroke="#0000ff" stroke-width="1"/><circle cx="519.5" cy="397.5" r="2.6" fill="#ff0000"/><line x1="600.5" y1="356.5" x2="600.5" y2="383" stroke="#0000ff" stroke-width="1"/><circle cx="598.1" cy="398" r="17.2" fill="none" stroke="#0000ff"/><line x1="589.5" y1="384.5" x2="589.5" y2="411.5" stroke="#0000ff" stroke-width="1"/><line x1="589.5" y1="398" x2="580.6" y2="398" stroke="#0000ff" stroke-width="1"/><line x1="600.5" y1="380.5" x2="600.5" y2="384" stroke="#0000ff" stroke-width="1"/><line x1="600.5" y1="412" x2="600.5" y2="415.5" stroke="#0000ff" stroke-width="1"/><line x1="589.5" y1="389" x2="600.5" y2="384" stroke="#0000ff" stroke-width="1"/><line x1="589.5" y1="407.5" x2="600.5" y2="413" stroke="#0000ff" stroke-width="1"/><polygon points="597.0,412.5 591.5,411.8 594.2,407.6" fill="#0000ff"/><line x1="600.5" y1="414" x2="600.5" y2="437.5" stroke="#0000ff" stroke-width="1"/><line x1="600.5" y1="437.5" x2="600.5" y2="457" stroke="#ff0000" stroke-width="1"/><line x1="600.5" y1="457" x2="600.5" y2="489.1" stroke="#0000ff" stroke-width="1"/><circle cx="610.4" cy="498.8" r="17.4" fill="none" stroke="#0000ff"/><line x1="612.2" y1="484.8" x2="612.2" y2="511.8" stroke="#0000ff" stroke-width="1"/><line x1="612.2" y1="489.3" x2="600.5" y2="489.3" stroke="#0000ff" stroke-width="1"/><line x1="612.2" y1="509.3" x2="600.5" y2="509.3" stroke="#0000ff" stroke-width="1"/><polygon points="612.7,509.3 618.2,506.3 618.2,512.3" fill="#0000ff"/><line x1="612.2" y1="509.5" x2="640.5" y2="509.5" stroke="#0000ff" stroke-width="1"/><polyline points="640.5,509.5 661.5,509.5 661.5,662" fill="none" stroke="#000000" stroke-width="1"/><line x1="600.5" y1="509.4" x2="600.5" y2="540.5" stroke="#0000ff" stroke-width="1"/><line x1="600.5" y1="540.5" x2="600.5" y2="621" stroke="#ff0000" stroke-width="1"/><line x1="519.5" y1="408.5" x2="519.5" y2="430" stroke="#0000ff" stroke-width="1"/><line x1="511.0" y1="430.2" x2="528.5" y2="430.2" stroke="#0000ff" stroke-width="1.1"/><polygon points="519.5,430.2 510.0,445.7 529.0,445.7" fill="#0000ff"/><line x1="531.3" y1="434.59999999999997" x2="536.5" y2="428.3" stroke="#0000ff" stroke-width="1"/><polygon points="533.5,425.6 543.1,421.9 540.6,431.3" fill="none" stroke="#0000ff" stroke-width="1"/><line x1="534.3" y1="447.59999999999997" x2="540.2" y2="442.4" stroke="#0000ff" stroke-width="1"/><polygon points="536.5,438.3 546.1,435.9 543.5,445.4" fill="none" stroke="#0000ff" stroke-width="1"/><line x1="519.5" y1="445.5" x2="519.5" y2="469.5" stroke="#0000ff" stroke-width="1"/><line x1="519.5" y1="469.5" x2="519.5" y2="479" stroke="#ff0000" stroke-width="1"/><line x1="519.5" y1="479" x2="519.5" y2="501" stroke="#0000ff" stroke-width="1"/><line x1="511.0" y1="501" x2="528.5" y2="501" stroke="#0000ff" stroke-width="1.1"/><polygon points="519.5,501 510.0,516.5 529.0,516.5" fill="#0000ff"/><line x1="531.3" y1="505.4" x2="536.5" y2="499.1" stroke="#0000ff" stroke-width="1"/><polygon points="533.5,496.4 543.1,492.7 540.6,502.1" fill="none" stroke="#0000ff" stroke-width="1"/><line x1="534.3" y1="518.4" x2="540.2" y2="513.2" stroke="#0000ff" stroke-width="1"/><polygon points="536.5,509.1 546.1,506.7 543.5,516.2" fill="none" stroke="#0000ff" stroke-width="1"/><line x1="519.5" y1="516.5" x2="519.5" y2="540.5" stroke="#0000ff" stroke-width="1"/><line x1="519.5" y1="540.5" x2="519.5" y2="561" stroke="#ff0000" stroke-width="1"/><line x1="519.5" y1="561" x2="519.5" y2="582" stroke="#0000ff" stroke-width="1"/><line x1="511.0" y1="582.1" x2="528.5" y2="582.1" stroke="#0000ff" stroke-width="1.1"/><polygon points="519.5,582.1 510.0,597.6 529.0,597.6" fill="#0000ff"/><line x1="531.3" y1="586.5" x2="536.5" y2="580.2" stroke="#0000ff" stroke-width="1"/><polygon points="533.5,577.5 543.1,573.8 540.6,583.2" fill="none" stroke="#0000ff" stroke-width="1"/><line x1="534.3" y1="599.5" x2="540.2" y2="594.3000000000001" stroke="#0000ff" stroke-width="1"/><polygon points="536.5,590.2 546.1,587.8 543.5,597.3" fill="none" stroke="#0000ff" stroke-width="1"/><line x1="519.5" y1="597.5" x2="519.5" y2="621" stroke="#0000ff" stroke-width="1"/><line x1="519.5" y1="621" x2="519.5" y2="642" stroke="#ff0000" stroke-width="1"/><line x1="438.5" y1="550.5" x2="600.5" y2="550.5" stroke="#ff0000" stroke-width="1"/><circle cx="600.5" cy="550.5" r="2.6" fill="#ff0000"/><circle cx="560.5" cy="550.5" r="2.2" fill="#ff0000"/><polyline points="560.5,550.5 560.5,681 550,681" fill="none" stroke="#ff0000" stroke-width="1"/><circle cx="519.5" cy="630.5" r="2.6" fill="#ff0000"/><polyline points="519.5,630.5 479.5,630.5 479.5,642" fill="none" stroke="#ff0000" stroke-width="1"/><line x1="479.5" y1="642" x2="479.5" y2="652" stroke="#000000" stroke-width="1"/><polyline points="479.5,652 485.5,655.5 475.0,660.5 485.5,665.5 475.0,670.5 485.5,676 475.0,680.5 479.5,682.5" fill="none" stroke="#000000" stroke-width="1"/><line x1="479.5" y1="682.5" x2="479.5" y2="692.5" stroke="#000000" stroke-width="1"/><line x1="479.5" y1="692.5" x2="479.5" y2="714" stroke="#0000ff" stroke-width="1"/><line x1="519.5" y1="642" x2="519.5" y2="664" stroke="#0000ff" stroke-width="1"/><circle cx="521.9" cy="681" r="17.2" fill="none" stroke="#0000ff"/><line x1="531.5" y1="667.5" x2="531.5" y2="694.5" stroke="#0000ff" stroke-width="1"/><line x1="531.5" y1="681" x2="539.4" y2="681" stroke="#0000ff" stroke-width="1"/><line x1="519.5" y1="663.5" x2="519.5" y2="667" stroke="#0000ff" stroke-width="1"/><line x1="519.5" y1="695" x2="519.5" y2="698.5" stroke="#0000ff" stroke-width="1"/><line x1="531.5" y1="672" x2="519.5" y2="667" stroke="#0000ff" stroke-width="1"/><line x1="531.5" y1="690.5" x2="519.5" y2="696" stroke="#0000ff" stroke-width="1"/><polygon points="523.0,695.5 526.0,690.8 528.6,695.1" fill="#0000ff"/><line x1="539" y1="681" x2="550" y2="681" stroke="#0000ff" stroke-width="1"/><line x1="519.5" y1="698" x2="519.5" y2="722" stroke="#0000ff" stroke-width="1"/><line x1="519.5" y1="722" x2="519.5" y2="783" stroke="#ff0000" stroke-width="1"/><line x1="519.5" y1="833" x2="519.5" y2="913.5" stroke="#ff0000" stroke-width="1"/><circle cx="519.5" cy="731.5" r="2.6" fill="#ff0000"/><circle cx="480.6" cy="731.6" r="17.2" fill="none" stroke="#0000ff"/><line x1="491.5" y1="718.1" x2="491.5" y2="745.1" stroke="#0000ff" stroke-width="1"/><line x1="491.5" y1="731.6" x2="498.1" y2="731.6" stroke="#0000ff" stroke-width="1"/><line x1="479.5" y1="714.1" x2="479.5" y2="717.6" stroke="#0000ff" stroke-width="1"/><line x1="479.5" y1="745.6" x2="479.5" y2="749.1" stroke="#0000ff" stroke-width="1"/><line x1="491.5" y1="722.6" x2="479.5" y2="717.6" stroke="#0000ff" stroke-width="1"/><line x1="491.5" y1="741.1" x2="479.5" y2="746.6" stroke="#0000ff" stroke-width="1"/><polygon points="488.0,720.1 482.4,719.7 485.0,715.4" fill="#0000ff"/><line x1="498" y1="731.5" x2="509.5" y2="731.5" stroke="#0000ff" stroke-width="1"/><line x1="509.5" y1="731.5" x2="519.5" y2="731.5" stroke="#ff0000" stroke-width="1"/><line x1="479.5" y1="748" x2="479.5" y2="772" stroke="#0000ff" stroke-width="1"/><line x1="479.5" y1="772" x2="479.5" y2="913.5" stroke="#ff0000" stroke-width="1"/><line x1="600.5" y1="621" x2="600.5" y2="631" stroke="#000000" stroke-width="1"/><polyline points="600.5,631 606.5,634.5 596.0,639.5 606.5,644.5 596.0,649.5 606.5,655 596.0,659.5 600.5,661.5" fill="none" stroke="#000000" stroke-width="1"/><line x1="600.5" y1="661.5" x2="600.5" y2="672" stroke="#000000" stroke-width="1"/><line x1="600.5" y1="672" x2="600.5" y2="695" stroke="#0000ff" stroke-width="1"/><circle cx="602.8" cy="711.5" r="17.2" fill="none" stroke="#0000ff"/><line x1="612.5" y1="698.0" x2="612.5" y2="725.0" stroke="#0000ff" stroke-width="1"/><line x1="612.5" y1="711.5" x2="620.3" y2="711.5" stroke="#0000ff" stroke-width="1"/><line x1="600.5" y1="694.0" x2="600.5" y2="697.5" stroke="#0000ff" stroke-width="1"/><line x1="600.5" y1="725.5" x2="600.5" y2="729.0" stroke="#0000ff" stroke-width="1"/><line x1="612.5" y1="702.5" x2="600.5" y2="697.5" stroke="#0000ff" stroke-width="1"/><line x1="612.5" y1="721.0" x2="600.5" y2="726.5" stroke="#0000ff" stroke-width="1"/><polygon points="604.0,726.0 607.0,721.3 609.6,725.6" fill="#0000ff"/><line x1="620" y1="711.5" x2="631" y2="711.5" stroke="#0000ff" stroke-width="1"/><polyline points="631,711.5 692.5,711.5 692.5,853.5" fill="none" stroke="#ff0000" stroke-width="1"/><circle cx="661.5" cy="711.5" r="2.6" fill="#ff0000"/><line x1="600.5" y1="728" x2="600.5" y2="776" stroke="#0000ff" stroke-width="1"/><circle cx="602.8" cy="792.9" r="17.2" fill="none" stroke="#0000ff"/><line x1="612.5" y1="779.4" x2="612.5" y2="806.4" stroke="#0000ff" stroke-width="1"/><line x1="612.5" y1="792.9" x2="620.3" y2="792.9" stroke="#0000ff" stroke-width="1"/><line x1="600.5" y1="775.4" x2="600.5" y2="778.9" stroke="#0000ff" stroke-width="1"/><line x1="600.5" y1="806.9" x2="600.5" y2="810.4" stroke="#0000ff" stroke-width="1"/><line x1="612.5" y1="783.9" x2="600.5" y2="778.9" stroke="#0000ff" stroke-width="1"/><line x1="612.5" y1="802.4" x2="600.5" y2="807.9" stroke="#0000ff" stroke-width="1"/><polygon points="604.0,807.4 607.0,802.7 609.6,807.0" fill="#0000ff"/><line x1="620" y1="792.5" x2="631" y2="792.5" stroke="#0000ff" stroke-width="1"/><line x1="631" y1="792.5" x2="661.5" y2="792.5" stroke="#ff0000" stroke-width="1"/><circle cx="661.5" cy="792.5" r="2.6" fill="#ff0000"/><line x1="600.5" y1="809" x2="600.5" y2="834" stroke="#0000ff" stroke-width="1"/><line x1="600.5" y1="834" x2="600.5" y2="853.5" stroke="#ff0000" stroke-width="1"/><circle cx="600.5" cy="842.5" r="2.6" fill="#ff0000"/><line x1="600.5" y1="842.5" x2="632" y2="842.5" stroke="#ff0000" stroke-width="1"/><line x1="632" y1="842.5" x2="641.5" y2="842.5" stroke="#0000ff" stroke-width="1"/><line x1="600.5" y1="853.5" x2="600.5" y2="864.5" stroke="#000000" stroke-width="1"/><polyline points="600.5,864.5 606.5,868.0 596.0,873.0 606.5,878.0 596.0,883.0 606.5,888.5 596.0,893.0 600.5,895.0" fill="none" stroke="#000000" stroke-width="1"/><line x1="600.5" y1="895" x2="600.5" y2="904" stroke="#000000" stroke-width="1"/><line x1="600.5" y1="904" x2="600.5" y2="913.5" stroke="#ff0000" stroke-width="1"/><polyline points="661.5,662 667.5,665.5 657.0,670.5 667.5,675.5 657.0,680.5 667.5,686 657.0,690.5 661.5,692.5" fill="none" stroke="#000000" stroke-width="1"/><line x1="661.5" y1="692.5" x2="661.5" y2="700.5" stroke="#000000" stroke-width="1"/><line x1="661.5" y1="700.5" x2="661.5" y2="731.5" stroke="#ff0000" stroke-width="1"/><line x1="661.5" y1="731.5" x2="661.5" y2="742.5" stroke="#000000" stroke-width="1"/><polyline points="661.5,742.5 667.5,746.0 657.0,751.0 667.5,756.0 657.0,761.0 667.5,766.5 657.0,771.0 661.5,773.0" fill="none" stroke="#000000" stroke-width="1"/><line x1="661.5" y1="773" x2="661.5" y2="782" stroke="#000000" stroke-width="1"/><line x1="661.5" y1="782" x2="661.5" y2="803.5" stroke="#ff0000" stroke-width="1"/><line x1="661.5" y1="803.5" x2="661.5" y2="826" stroke="#0000ff" stroke-width="1"/><circle cx="659" cy="842.8" r="17.2" fill="none" stroke="#0000ff"/><line x1="650.5" y1="829.3" x2="650.5" y2="856.3" stroke="#0000ff" stroke-width="1"/><line x1="650.5" y1="842.8" x2="641.5" y2="842.8" stroke="#0000ff" stroke-width="1"/><line x1="661.5" y1="825.3" x2="661.5" y2="828.8" stroke="#0000ff" stroke-width="1"/><line x1="661.5" y1="856.8" x2="661.5" y2="860.3" stroke="#0000ff" stroke-width="1"/><line x1="650.5" y1="833.8" x2="661.5" y2="828.8" stroke="#0000ff" stroke-width="1"/><line x1="650.5" y1="852.3" x2="661.5" y2="857.8" stroke="#0000ff" stroke-width="1"/><polygon points="658.0,857.3 652.5,856.6 655.2,852.4" fill="#0000ff"/><line x1="661.5" y1="859" x2="661.5" y2="885" stroke="#0000ff" stroke-width="1"/><line x1="661.5" y1="885" x2="661.5" y2="913.5" stroke="#ff0000" stroke-width="1"/><line x1="692.5" y1="853.5" x2="692.5" y2="875.5" stroke="#000000" stroke-width="1"/><line x1="681" y1="875.5" x2="703" y2="875.5" stroke="#000000" stroke-width="2.5"/><line x1="681" y1="883" x2="703" y2="883" stroke="#000000" stroke-width="2.5"/><line x1="692.5" y1="883" x2="692.5" y2="904" stroke="#000000" stroke-width="1"/><line x1="692.5" y1="904" x2="692.5" y2="913.5" stroke="#ff0000" stroke-width="1"/><polyline points="449.5,894 449.5,913.5 692.5,913.5" fill="none" stroke="#ff0000" stroke-width="1"/><circle cx="479.5" cy="913.5" r="2.2" fill="#ff0000"/><circle cx="519.5" cy="913.5" r="2.6" fill="#ff0000"/><circle cx="600.5" cy="913.5" r="2.6" fill="#ff0000"/><circle cx="661.5" cy="913.5" r="2.2" fill="#ff0000"/><polyline points="418.5,853.5 418.5,843.5 449.5,843.5 449.5,863.5" fill="none" stroke="#000000" stroke-width="1"/><line x1="408.5" y1="853.5" x2="428.5" y2="853.5" stroke="#000000" stroke-width="1"/><line x1="412.5" y1="856.5" x2="424.5" y2="856.5" stroke="#000000" stroke-width="1"/><line x1="415.5" y1="860.0" x2="421.5" y2="860.0" stroke="#000000" stroke-width="1"/><line x1="435.5" y1="863.5" x2="462" y2="863.5" stroke="#000000" stroke-width="1"/><line x1="442" y1="870.5" x2="456" y2="870.5" stroke="#000000" stroke-width="1"/><line x1="435.5" y1="877.5" x2="462" y2="877.5" stroke="#000000" stroke-width="1"/><line x1="442" y1="884.5" x2="456" y2="884.5" stroke="#000000" stroke-width="1"/><line x1="449.5" y1="884.5" x2="449.5" y2="894" stroke="#000000" stroke-width="1"/><line x1="519.5" y1="783" x2="519.5" y2="794.5" stroke="#000000" stroke-width="1"/><polyline points="519.5,794.5 525.5,798.0 515.0,803.0 525.5,808.0 515.0,813.0 525.5,818.5 515.0,823.0 519.5,825.0" fill="none" stroke="#000000" stroke-width="1"/><line x1="519.5" y1="825" x2="519.5" y2="833" stroke="#000000" stroke-width="1"/><rect x="246.5" y="226.5" width="90" height="59" fill="#c2dcc2" stroke="#000"/><rect x="252.5" y="229.5" width="61" height="23" fill="#c0c0c0" stroke="#fff"/><polyline points="256,236.5 282,236.5 305,250" fill="none" stroke="#000000" stroke-width="1"/><line x1="285.5" y1="231" x2="285.5" y2="251" stroke="#000000" stroke-width="1"/><text x="259.5" y="265.5" fill="#000000" font-family="Liberation Sans" font-size="13" font-weight="normal" text-anchor="start">IN</text><text x="303.5" y="265.5" fill="#000000" font-family="Liberation Sans" font-size="13" font-weight="normal" text-anchor="start">OUT</text><text x="256.5" y="276" fill="#000000" font-family="Liberation Sans" font-size="12" font-weight="normal" text-anchor="middle">+</text><text x="276.5" y="276" fill="#000000" font-family="Liberation Sans" font-size="12" font-weight="normal" text-anchor="middle">−</text><text x="306.5" y="276" fill="#000000" font-family="Liberation Sans" font-size="12" font-weight="normal" text-anchor="middle">+</text><text x="327" y="276" fill="#000000" font-family="Liberation Sans" font-size="12" font-weight="normal" text-anchor="middle">−</text><circle cx="256.5" cy="279.5" r="3" fill="#a0a0a0" stroke="#000" stroke-width="1"/><circle cx="276.5" cy="279.5" r="3" fill="#a0a0a0" stroke="#000" stroke-width="1"/><circle cx="306.5" cy="279.5" r="3" fill="#a0a0a0" stroke="#000" stroke-width="1"/><circle cx="327.5" cy="279.5" r="3" fill="#a0a0a0" stroke="#000" stroke-width="1"/><text x="290.5" y="217.5" fill="#000000" font-family="Liberation Serif" font-size="13" font-weight="bold" text-anchor="middle">XBP1</text><rect x="287.5" y="367.5" width="59" height="40" fill="#c2dcc2" stroke="#000"/><rect x="289.5" y="373" width="16" height="11" fill="#c0c0c0" stroke="#fff"/><rect x="309.5" y="373" width="16" height="11" fill="#c0c0c0" stroke="#fff"/><rect x="329.5" y="373" width="16" height="11" fill="#c0c0c0" stroke="#fff"/><polyline points="291,381 294,377 297,381 300,377 303,381" fill="none" stroke="#000000" stroke-width="1"/><path d="M311 381q3-6 6-2t6-2" fill="none" stroke="#000"/><polyline points="331,381 334,381 334,376 337,376 337,381 340,381 340,376 343,376" fill="none" stroke="#000000" stroke-width="1"/><text x="296.5" y="396" fill="#000000" font-family="Liberation Sans" font-size="11" font-weight="normal" text-anchor="middle">+</text><text x="317" y="395.5" fill="#000000" font-family="Liberation Sans" font-size="8.5" font-weight="normal" text-anchor="middle">COM</text><text x="337.5" y="396" fill="#000000" font-family="Liberation Sans" font-size="11" font-weight="normal" text-anchor="middle">−</text><circle cx="296.5" cy="401" r="2.6" fill="#a0a0a0" stroke="#000" stroke-width="1"/><circle cx="317.5" cy="401" r="2.6" fill="#a0a0a0" stroke="#000" stroke-width="1"/><circle cx="337.5" cy="401" r="2.6" fill="#a0a0a0" stroke="#000" stroke-width="1"/><text x="316" y="358.5" fill="#000000" font-family="Liberation Serif" font-size="13" font-weight="bold" text-anchor="middle">XFG1</text><rect x="752.5" y="256.5" width="60" height="29" fill="#c2dcc2" stroke="#000"/><rect x="759" y="259.5" width="46" height="12.5" fill="#c0c0c0" stroke="#fff"/><text x="782" y="270.5" fill="#000000" font-family="Liberation Sans" font-size="10" font-weight="normal" text-anchor="middle">THD</text><rect x="759.5" y="276.5" width="6" height="6" fill="#a0a0a0" stroke="#000"/><rect x="769.5" y="276.5" width="6" height="6" fill="#a0a0a0" stroke="#000"/><rect x="779.5" y="276.5" width="6" height="6" fill="#a0a0a0" stroke="#000"/><circle cx="803" cy="279" r="3" fill="#a0a0a0" stroke="#000" stroke-width="1"/><text x="782.5" y="247" fill="#000000" font-family="Liberation Serif" font-size="13" font-weight="bold" text-anchor="middle">XDA1</text><rect x="823.5" y="226.5" width="111" height="80" fill="#c2dcc2" stroke="#000"/><rect x="827.5" y="229.5" width="69" height="50" fill="#c0c0c0" stroke="#fff"/><path d="M832 254C836 228 852 228 858 248S878 292 894 250M832 254C837 236 852 236 858 252S882 282 893 258" fill="none" stroke="#000" stroke-width="0.9"/><text x="905.5" y="256" fill="#000000" font-family="Liberation Sans" font-size="8.5" font-weight="normal" text-anchor="start">Ext Trig</text><circle cx="924" cy="266" r="3.5" fill="#a0a0a0" stroke="#000" stroke-width="1"/><circle cx="924" cy="266" r="1.6" fill="#000"/><text x="929" y="262" fill="#000000" font-family="Liberation Sans" font-size="8" font-weight="normal" text-anchor="start">+</text><text x="927" y="284" fill="#000000" font-family="Liberation Sans" font-size="8" font-weight="normal" text-anchor="start">−</text><line x1="833.5" y1="297.5" x2="833.5" y2="317.5" stroke="#000000" stroke-width="1"/><polyline points="833.5,297.5 843.5,297.5 843.5,307" fill="none" stroke="#000000" stroke-width="1"/><line x1="873.5" y1="297.5" x2="873.5" y2="317.5" stroke="#000000" stroke-width="1"/><polyline points="873.5,297.5 884.5,297.5 884.5,307" fill="none" stroke="#000000" stroke-width="1"/><text x="833.5" y="290.5" fill="#000000" font-family="Liberation Sans" font-size="9" font-weight="normal" text-anchor="middle">A</text><circle cx="833.5" cy="297.5" r="4" fill="#a0a0a0" stroke="#000"/><circle cx="833.5" cy="297.5" r="2" fill="#000"/><text x="826.5" y="304" fill="#000000" font-family="Liberation Sans" font-size="8" font-weight="normal" text-anchor="middle">+</text><text x="846.5" y="304" fill="#000000" font-family="Liberation Sans" font-size="8" font-weight="normal" text-anchor="middle">−</text><text x="873.5" y="290.5" fill="#000000" font-family="Liberation Sans" font-size="9" font-weight="normal" text-anchor="middle">B</text><circle cx="873.5" cy="297.5" r="4" fill="#a0a0a0" stroke="#000"/><circle cx="873.5" cy="297.5" r="2" fill="#000"/><text x="866.5" y="304" fill="#000000" font-family="Liberation Sans" font-size="8" font-weight="normal" text-anchor="middle">+</text><text x="886.5" y="304" fill="#000000" font-family="Liberation Sans" font-size="8" font-weight="normal" text-anchor="middle">−</text><text x="883.5" y="217.5" fill="#000000" font-family="Liberation Serif" font-size="13" font-weight="bold" text-anchor="middle">XSC1</text><text x="390.5" y="256.5" fill="#000000" font-family="Liberation Sans" font-size="14.5" font-weight="bold" text-anchor="start">R10</text><text x="386" y="277" fill="#000000" font-family="Liberation Sans" font-size="14.5" font-weight="bold" text-anchor="start">2k7Ω</text><text x="479.5" y="246" fill="#000000" font-family="Liberation Sans" font-size="14.5" font-weight="bold" text-anchor="start">R6</text><text x="477.5" y="266" fill="#000000" font-family="Liberation Sans" font-size="14.5" font-weight="bold" text-anchor="start">10kΩ</text><text x="563.5" y="246" fill="#000000" font-family="Liberation Sans" font-size="14.5" font-weight="bold" text-anchor="start">R4</text><text x="558.5" y="266" fill="#000000" font-family="Liberation Sans" font-size="14.5" font-weight="bold" text-anchor="start">2k7Ω</text><text x="454.5" y="289" fill="#000000" font-family="Liberation Sans" font-size="14.5" font-weight="bold" text-anchor="start">R19</text><text x="453.5" y="309" fill="#000000" font-family="Liberation Sans" font-size="14.5" font-weight="bold" text-anchor="start">360Ω</text><text x="555" y="295" fill="#000000" font-family="Liberation Sans" font-size="14.5" font-weight="bold" text-anchor="start">C1</text><text x="553" y="305" fill="#000000" font-family="Liberation Sans" font-size="14.5" font-weight="bold" text-anchor="start">390pF</text><text x="677" y="282.5" fill="#000000" font-family="Liberation Sans" font-size="14.5" font-weight="bold" text-anchor="start">V1</text><text x="677" y="302.5" fill="#000000" font-family="Liberation Sans" font-size="14.5" font-weight="bold" text-anchor="start">15V</text><text x="317.5" y="497" fill="#000000" font-family="Liberation Sans" font-size="14.5" font-weight="bold" text-anchor="start">R13</text><text x="313.5" y="529.5" fill="#000000" font-family="Liberation Sans" font-size="14.5" font-weight="bold" text-anchor="start">2k7Ω</text><text x="248.5" y="559.5" fill="#000000" font-family="Liberation Sans" font-size="14.5" font-weight="bold" text-anchor="start">R5</text><text x="222" y="580" fill="#000000" font-family="Liberation Sans" font-size="14.5" font-weight="bold" text-anchor="start">100KΩ</text><text x="325.5" y="570" fill="#000000" font-family="Liberation Sans" font-size="14.5" font-weight="bold" text-anchor="start">C2</text><text x="321" y="587.5" fill="#000000" font-family="Liberation Sans" font-size="14.5" font-weight="bold" text-anchor="start">390pF</text><text x="758" y="410.5" fill="#000000" font-family="Liberation Sans" font-size="14.5" font-weight="bold" text-anchor="start">R2</text><text x="757.5" y="441.5" fill="#000000" font-family="Liberation Sans" font-size="14.5" font-weight="bold" text-anchor="start">50KΩ</text><text x="757.5" y="459" fill="#000000" font-family="Liberation Sans" font-size="14.5" font-weight="bold" text-anchor="start">Key=A</text><text x="757" y="476.5" fill="#000000" font-family="Liberation Sans" font-size="14.5" font-weight="bold" text-anchor="start">45 %</text><text x="750" y="531.5" fill="#000000" font-family="Liberation Sans" font-size="14.5" font-weight="bold" text-anchor="start">R14</text><text x="747" y="553" fill="#000000" font-family="Liberation Sans" font-size="14.5" font-weight="bold" text-anchor="start">50KΩ</text><text x="747" y="570" fill="#000000" font-family="Liberation Sans" font-size="14.5" font-weight="bold" text-anchor="start">Key=A</text><text x="747" y="587.5" fill="#000000" font-family="Liberation Sans" font-size="14.5" font-weight="bold" text-anchor="start">45 %</text><text x="608.5" y="631" fill="#000000" font-family="Liberation Sans" font-size="14.5" font-weight="bold" text-anchor="start">R11</text><text x="608.5" y="651" fill="#000000" font-family="Liberation Sans" font-size="14.5" font-weight="bold" text-anchor="start">1kΩ</text><text x="669" y="661" fill="#000000" font-family="Liberation Sans" font-size="14.5" font-weight="bold" text-anchor="start">R8</text><text x="669" y="681.5" fill="#000000" font-family="Liberation Sans" font-size="14.5" font-weight="bold" text-anchor="start">68kΩ</text><text x="624.5" y="742" fill="#000000" font-family="Liberation Sans" font-size="14.5" font-weight="bold" text-anchor="start">R7</text><text x="619.5" y="762.5" fill="#000000" font-family="Liberation Sans" font-size="14.5" font-weight="bold" text-anchor="start">3kΩ</text><text x="441" y="661.5" fill="#000000" font-family="Liberation Sans" font-size="14.5" font-weight="bold" text-anchor="start">R12</text><text x="436" y="681.5" fill="#000000" font-family="Liberation Sans" font-size="14.5" font-weight="bold" text-anchor="start">150Ω</text><text x="528" y="783" fill="#000000" font-family="Liberation Sans" font-size="14.5" font-weight="bold" text-anchor="start">R1</text><text x="528" y="803" fill="#000000" font-family="Liberation Sans" font-size="14.5" font-weight="bold" text-anchor="start">33kΩ</text><text x="563" y="873.5" fill="#000000" font-family="Liberation Sans" font-size="14.5" font-weight="bold" text-anchor="start">R3</text><text x="558" y="894" fill="#000000" font-family="Liberation Sans" font-size="14.5" font-weight="bold" text-anchor="start">68Ω</text><text x="705" y="873.5" fill="#000000" font-family="Liberation Sans" font-size="14.5" font-weight="bold" text-anchor="start">C10</text><text x="705" y="894" fill="#000000" font-family="Liberation Sans" font-size="14.5" font-weight="bold" text-anchor="start">0μ22F</text><text x="409.5" y="882.5" fill="#000000" font-family="Liberation Sans" font-size="14.5" font-weight="bold" text-anchor="start">V2</text><text x="404" y="903" fill="#000000" font-family="Liberation Sans" font-size="14.5" font-weight="bold" text-anchor="start">15V</text><text x="554.5" y="372.5" fill="#000000" font-family="Liberation Sans" font-size="14.5" font-weight="bold" text-anchor="start">Пробник1</text><text x="635" y="443" fill="#000000" font-family="Liberation Sans" font-size="14.5" font-weight="bold" text-anchor="start">Пробник2</text><text x="419.5" y="414" fill="#0000ff" font-family="Liberation Sans" font-size="14.5" font-weight="bold" text-anchor="end">Q3</text><text x="429.5" y="432" fill="#0000ff" font-family="Liberation Sans" font-size="14.5" font-weight="bold" text-anchor="end">2N5551</text><text x="429" y="454.5" fill="#0000ff" font-family="Liberation Sans" font-size="14.5" font-weight="bold" text-anchor="end">Q1</text><text x="431.5" y="472.5" fill="#0000ff" font-family="Liberation Sans" font-size="14.5" font-weight="bold" text-anchor="end">2SK170</text><text x="619.5" y="383.5" fill="#0000ff" font-family="Liberation Sans" font-size="14.5" font-weight="bold" text-anchor="start">Q2</text><text x="619.5" y="401" fill="#0000ff" font-family="Liberation Sans" font-size="14.5" font-weight="bold" text-anchor="start">2N5551</text><text x="617" y="454" fill="#0000ff" font-family="Liberation Sans" font-size="14.5" font-weight="bold" text-anchor="start">Q4</text><text x="617" y="472" fill="#0000ff" font-family="Liberation Sans" font-size="14.5" font-weight="bold" text-anchor="start">2SK170</text><text x="549.5" y="418" fill="#0000ff" font-family="Liberation Sans" font-size="14.5" font-weight="bold" text-anchor="start">LED3</text><text x="549.5" y="489" fill="#0000ff" font-family="Liberation Sans" font-size="14.5" font-weight="bold" text-anchor="start">LED1</text><text x="549.5" y="569.5" fill="#0000ff" font-family="Liberation Sans" font-size="14.5" font-weight="bold" text-anchor="start">LED2</text><text x="538.5" y="697" fill="#0000ff" font-family="Liberation Sans" font-size="14.5" font-weight="bold" text-anchor="start">Q10</text><text x="529.5" y="716" fill="#0000ff" font-family="Liberation Sans" font-size="14.5" font-weight="bold" text-anchor="start">2N5551</text><text x="459.5" y="747.5" fill="#0000ff" font-family="Liberation Sans" font-size="14.5" font-weight="bold" text-anchor="end">Q8</text><text x="470" y="767" fill="#0000ff" font-family="Liberation Sans" font-size="14.5" font-weight="bold" text-anchor="end">2N5401</text><text x="592" y="737.5" fill="#0000ff" font-family="Liberation Sans" font-size="14.5" font-weight="bold" text-anchor="end">Q7</text><text x="592" y="754.5" fill="#0000ff" font-family="Liberation Sans" font-size="14.5" font-weight="bold" text-anchor="end">2N5551</text><text x="592.5" y="818.5" fill="#0000ff" font-family="Liberation Sans" font-size="14.5" font-weight="bold" text-anchor="end">Q5</text><text x="592.5" y="837" fill="#0000ff" font-family="Liberation Sans" font-size="14.5" font-weight="bold" text-anchor="end">2N5551</text><text x="633.5" y="880" fill="#0000ff" font-family="Liberation Sans" font-size="14.5" font-weight="bold" text-anchor="start">Q6</text><text x="609" y="897.5" fill="#0000ff" font-family="Liberation Sans" font-size="14.5" font-weight="bold" text-anchor="start">2N5551</text><line x1="725" y1="219" x2="543" y2="353" stroke="#3a78c8" stroke-width="1"/><line x1="529.5" y1="367.5" x2="520.5" y2="376.5" stroke="#6a8a6a" stroke-width="5.5"/><line x1="529.5" y1="367.5" x2="520.5" y2="376.5" stroke="#b4d8a8" stroke-width="3.5"/><circle cx="534.6" cy="359.3" r="8.8" fill="#fff" stroke="#4a70a0" stroke-width="2.4"/><text x="534.6" y="364.2" fill="#5a8a5a" font-family="Liberation Sans" font-size="11.5" font-weight="normal" text-anchor="middle">V</text><line x1="625.5" y1="431" x2="827.5" y2="425" stroke="#6a9ad8" stroke-width="1"/><line x1="610" y1="438.5" x2="602.5" y2="448" stroke="#b4d8a8" stroke-width="4"/><polygon points="600.5,457 596,446 600.5,449 605,447" fill="#6a8a6a"/><circle cx="615.2" cy="431.1" r="8.8" fill="#fff" stroke="#6e8e6e" stroke-width="2.4"/><text x="615.2" y="435.5" fill="#6e8e6e" font-family="Liberation Sans" font-size="11.5" font-weight="normal" text-anchor="middle">A</text><rect x="726.5" y="139.5" width="92" height="78" fill="#ffffc0" stroke="#4a7ac0"/><text x="732.5" y="152.5" fill="#000000" font-family="Liberation Sans" font-size="11.1" font-weight="normal" text-anchor="start">V: 722 mV</text><text x="732.5" y="166.6" fill="#000000" font-family="Liberation Sans" font-size="11.1" font-weight="normal" text-anchor="start">V(p-p): 27.2 mV</text><text x="732.5" y="180.7" fill="#000000" font-family="Liberation Sans" font-size="11.1" font-weight="normal" text-anchor="start">V(rms): 743 mV</text><text x="732.5" y="194.8" fill="#000000" font-family="Liberation Sans" font-size="11.1" font-weight="normal" text-anchor="start">V(dc): 743 mV</text><text x="732.5" y="208.9" fill="#000000" font-family="Liberation Sans" font-size="11.1" font-weight="normal" text-anchor="start">V(freq): 50.0 kHz</text><rect x="723.5" y="136.5" width="5" height="5" fill="#0000ff"/><rect x="769.5" y="136.5" width="5" height="5" fill="#0000ff"/><rect x="815.5" y="136.5" width="5" height="5" fill="#0000ff"/><rect x="723.5" y="175.5" width="5" height="5" fill="#0000ff"/><rect x="815.5" y="175.5" width="5" height="5" fill="#0000ff"/><rect x="723.5" y="214.5" width="5" height="5" fill="#0000ff"/><rect x="769.5" y="214.5" width="5" height="5" fill="#0000ff"/><rect x="815.5" y="214.5" width="5" height="5" fill="#0000ff"/><rect x="827.5" y="386.5" width="86" height="78" rx="2" fill="#ffffc0" stroke="#9ab0e0"/><text x="833" y="400" fill="#000000" font-family="Liberation Sans" font-size="10.8" font-weight="normal" text-anchor="start">I: 4.17 mA</text><text x="833" y="414" fill="#000000" font-family="Liberation Sans" font-size="10.8" font-weight="normal" text-anchor="start">I(p-p): 3.35 mA</text><text x="833" y="428" fill="#000000" font-family="Liberation Sans" font-size="10.8" font-weight="normal" text-anchor="start">I(rms): 5.40 mA</text><text x="833" y="442" fill="#000000" font-family="Liberation Sans" font-size="10.8" font-weight="normal" text-anchor="start">I(dc): 5.26 mA</text><text x="833" y="456" fill="#000000" font-family="Liberation Sans" font-size="10.8" font-weight="normal" text-anchor="start">I(freq): 50.0 kHz</text></svg>
<div class="a" style="left:0px;top:979px;width:1920px;height:1px;background:#a0a0a0"></div>
<div class="a" style="left:0px;top:980px;width:1920px;height:28px;background:#f0f0f0"></div>
<div class="a" style="left:3px;top:979px;width:51px;height:27px;background:#f0f0f0;border:1px solid #7a7a7a;border-top:none;border-radius:0 0 3px 3px"></div>
<svg class="a" style="left:6px;top:983px;" width="22" height="22" viewBox="0 0 22 22"><path d="M1.5 1.5h13l5 5v14h-18z" fill="#fff" stroke="#000"/><path d="M4 5h3v12h-3zM7 12h6v-7" fill="none" stroke="#e00" stroke-width="1.4"/><path d="M8 4l3 3-3 3zM8 13l3 3-3 3" fill="#000"/></svg>
<div class="t" style="left:31.00px;top:986.33px;font-size:15px;">1 *</div>
<div class="a" style="left:0px;top:1008px;width:1920px;height:1px;background:#d7d7d7"></div>
<div class="a" style="left:0px;top:1009px;width:1920px;height:21px;background:#f0f0f0"></div>
<div class="t" style="left:2.00px;top:1013.16px;font-size:15.2px;">Статический пробник: Обозначение(Пробник1); Расположение(D8)</div>
<div class="a" style="left:958px;top:393px;width:849px;height:700px;background:#f0f0f0;border:1px solid #9a9a9a;box-shadow:0 0 10px 2px rgba(0,0,0,0.2)"></div>
<div class="a" style="left:959px;top:394px;width:847px;height:37px;background:#fff"></div>
<div class="t" style="left:968.00px;top:406.09px;font-size:14.1px;color:#9b9b9b">Осциллограф-XSC1</div>
<svg class="a" style="left:1778px;top:406px;" width="14" height="14" viewBox="0 0 14 14"><path d="M1 1L13 13M13 1L1 13" stroke="#5a5a5a" stroke-width="1.1"/></svg>
<div class="a" style="left:959px;top:431px;width:847px;height:414px;background:#6e6e6e"></div>
<div class="a" style="left:960px;top:432px;width:845px;height:412px;background:#fff"></div>
<div class="a" style="left:960px;top:432px;width:843px;height:410px;background:#a0a0a0"></div>
<div class="a" style="left:961px;top:433px;width:842px;height:409px;background:#5a5a5a"></div>
<div class="a" style="left:962px;top:434px;width:841px;height:408px;background:#000"></div>
<svg class="a" style="left:0px;top:0px;" width="1920" height="900" viewBox="0 0 1920 900"><line x1="970.5" y1="442.5" x2="970.5" y2="834.5" stroke="#fff"/><line x1="1053.5" y1="442.5" x2="1053.5" y2="834.5" stroke="#e0e0e0" stroke-dasharray="3 3"/><line x1="1135.5" y1="442.5" x2="1135.5" y2="834.5" stroke="#e0e0e0" stroke-dasharray="3 3"/><line x1="1218.5" y1="442.5" x2="1218.5" y2="834.5" stroke="#e0e0e0" stroke-dasharray="3 3"/><line x1="1300.5" y1="442.5" x2="1300.5" y2="834.5" stroke="#e0e0e0" stroke-dasharray="3 3"/><line x1="1383.5" y1="442.5" x2="1383.5" y2="834.5" stroke="#e0e0e0" stroke-dasharray="3 3"/><line x1="1465.5" y1="442.5" x2="1465.5" y2="834.5" stroke="#e0e0e0" stroke-dasharray="3 3"/><line x1="1548.5" y1="442.5" x2="1548.5" y2="834.5" stroke="#e0e0e0" stroke-dasharray="3 3"/><line x1="1630.5" y1="442.5" x2="1630.5" y2="834.5" stroke="#e0e0e0" stroke-dasharray="3 3"/><line x1="1713.5" y1="442.5" x2="1713.5" y2="834.5" stroke="#e0e0e0" stroke-dasharray="3 3"/><line x1="1795.5" y1="442.5" x2="1795.5" y2="834.5" stroke="#fff"/><line x1="970.5" y1="442.5" x2="1795.5" y2="442.5" stroke="#fff"/><line x1="970.5" y1="507.5" x2="1795.5" y2="507.5" stroke="#e0e0e0" stroke-dasharray="3 3"/><line x1="970.5" y1="573.5" x2="1795.5" y2="573.5" stroke="#e0e0e0" stroke-dasharray="3 3"/><line x1="967.5" y1="638.5" x2="1798.5" y2="638.5" stroke="#fff" stroke-width="1.5"/><line x1="970.5" y1="703.5" x2="1795.5" y2="703.5" stroke="#e0e0e0" stroke-dasharray="3 3"/><line x1="970.5" y1="769.5" x2="1795.5" y2="769.5" stroke="#e0e0e0" stroke-dasharray="3 3"/><line x1="970.5" y1="834.5" x2="1795.5" y2="834.5" stroke="#fff"/><line x1="970.5" y1="633.5" x2="970.5" y2="643.5" stroke="#fff"/><line x1="987.0" y1="635.5" x2="987.0" y2="641.5" stroke="#fff"/><line x1="1003.5" y1="635.5" x2="1003.5" y2="641.5" stroke="#fff"/><line x1="1020.0" y1="635.5" x2="1020.0" y2="641.5" stroke="#fff"/><line x1="1036.5" y1="635.5" x2="1036.5" y2="641.5" stroke="#fff"/><line x1="1053.0" y1="633.5" x2="1053.0" y2="643.5" stroke="#fff"/><line x1="1069.5" y1="635.5" x2="1069.5" y2="641.5" stroke="#fff"/><line x1="1086.0" y1="635.5" x2="1086.0" y2="641.5" stroke="#fff"/><line x1="1102.5" y1="635.5" x2="1102.5" y2="641.5" stroke="#fff"/><line x1="1119.0" y1="635.5" x2="1119.0" y2="641.5" stroke="#fff"/><line x1="1135.5" y1="633.5" x2="1135.5" y2="643.5" stroke="#fff"/><line x1="1152.0" y1="635.5" x2="1152.0" y2="641.5" stroke="#fff"/><line x1="1168.5" y1="635.5" x2="1168.5" y2="641.5" stroke="#fff"/><line x1="1185.0" y1="635.5" x2="1185.0" y2="641.5" stroke="#fff"/><line x1="1201.5" y1="635.5" x2="1201.5" y2="641.5" stroke="#fff"/><line x1="1218.0" y1="633.5" x2="1218.0" y2="643.5" stroke="#fff"/><line x1="1234.5" y1="635.5" x2="1234.5" y2="641.5" stroke="#fff"/><line x1="1251.0" y1="635.5" x2="1251.0" y2="641.5" stroke="#fff"/><line x1="1267.5" y1="635.5" x2="1267.5" y2="641.5" stroke="#fff"/><line x1="1284.0" y1="635.5" x2="1284.0" y2="641.5" stroke="#fff"/><line x1="1300.5" y1="633.5" x2="1300.5" y2="643.5" stroke="#fff"/><line x1="1317.0" y1="635.5" x2="1317.0" y2="641.5" stroke="#fff"/><line x1="1333.5" y1="635.5" x2="1333.5" y2="641.5" stroke="#fff"/><line x1="1350.0" y1="635.5" x2="1350.0" y2="641.5" stroke="#fff"/><line x1="1366.5" y1="635.5" x2="1366.5" y2="641.5" stroke="#fff"/><line x1="1383.0" y1="633.5" x2="1383.0" y2="643.5" stroke="#fff"/><line x1="1399.5" y1="635.5" x2="1399.5" y2="641.5" stroke="#fff"/><line x1="1416.0" y1="635.5" x2="1416.0" y2="641.5" stroke="#fff"/><line x1="1432.5" y1="635.5" x2="1432.5" y2="641.5" stroke="#fff"/><line x1="1449.0" y1="635.5" x2="1449.0" y2="641.5" stroke="#fff"/><line x1="1465.5" y1="633.5" x2="1465.5" y2="643.5" stroke="#fff"/><line x1="1482.0" y1="635.5" x2="1482.0" y2="641.5" stroke="#fff"/><line x1="1498.5" y1="635.5" x2="1498.5" y2="641.5" stroke="#fff"/><line x1="1515.0" y1="635.5" x2="1515.0" y2="641.5" stroke="#fff"/><line x1="1531.5" y1="635.5" x2="1531.5" y2="641.5" stroke="#fff"/><line x1="1548.0" y1="633.5" x2="1548.0" y2="643.5" stroke="#fff"/><line x1="1564.5" y1="635.5" x2="1564.5" y2="641.5" stroke="#fff"/><line x1="1581.0" y1="635.5" x2="1581.0" y2="641.5" stroke="#fff"/><line x1="1597.5" y1="635.5" x2="1597.5" y2="641.5" stroke="#fff"/><line x1="1614.0" y1="635.5" x2="1614.0" y2="641.5" stroke="#fff"/><line x1="1630.5" y1="633.5" x2="1630.5" y2="643.5" stroke="#fff"/><line x1="1647.0" y1="635.5" x2="1647.0" y2="641.5" stroke="#fff"/><line x1="1663.5" y1="635.5" x2="1663.5" y2="641.5" stroke="#fff"/><line x1="1680.0" y1="635.5" x2="1680.0" y2="641.5" stroke="#fff"/><line x1="1696.5" y1="635.5" x2="1696.5" y2="641.5" stroke="#fff"/><line x1="1713.0" y1="633.5" x2="1713.0" y2="643.5" stroke="#fff"/><line x1="1729.5" y1="635.5" x2="1729.5" y2="641.5" stroke="#fff"/><line x1="1746.0" y1="635.5" x2="1746.0" y2="641.5" stroke="#fff"/><line x1="1762.5" y1="635.5" x2="1762.5" y2="641.5" stroke="#fff"/><line x1="1779.0" y1="635.5" x2="1779.0" y2="641.5" stroke="#fff"/><line x1="1795.5" y1="633.5" x2="1795.5" y2="643.5" stroke="#fff"/><polyline points="970.5,558.9 971.0,553.8 971.5,549.0 972.0,544.6 972.5,540.6 973.0,537.1 973.5,534.2 974.0,531.9 974.5,530.4 975.0,529.5 975.5,529.5 976.0,530.1 976.5,531.5 977.0,533.7 977.5,536.4 978.0,539.8 978.5,543.7 979.0,548.1 979.5,552.8 980.0,557.8 980.5,563.0 981.0,568.2 981.5,573.4 982.0,578.4 982.5,583.2 983.0,587.5 983.5,591.5 984.0,594.8 984.5,597.5 985.0,599.4 985.5,600.3 986.0,600.3 986.5,600.3 987.0,600.3 987.5,600.3 988.0,600.3 988.5,600.3 989.0,600.3 989.5,600.3 990.0,600.3 990.5,600.3 991.0,600.3 991.5,600.3 992.0,600.3 992.5,600.3 993.0,600.3 993.5,600.3 994.0,600.3 994.5,600.3 995.0,600.3 995.5,600.3 996.0,600.3 996.5,600.3 997.0,600.3 997.5,600.3 998.0,600.3 998.5,600.3 999.0,599.2 999.5,597.2 1000.0,594.4 1000.5,590.9 1001.0,586.9 1001.5,582.5 1002.0,577.7 1002.5,572.7 1003.0,567.5 1003.5,562.3 1004.0,557.1 1004.5,552.2 1005.0,547.5 1005.5,543.2 1006.0,539.3 1006.5,536.0 1007.0,533.3 1007.5,531.3 1008.0,530.0 1008.5,529.4 1009.0,529.6 1009.5,530.5 1010.0,532.2 1010.5,534.5 1011.0,537.5 1011.5,541.1 1012.0,545.2 1012.5,549.7 1013.0,554.5 1013.5,559.6 1014.0,564.8 1014.5,570.0 1015.0,575.1 1015.5,580.1 1016.0,584.7 1016.5,588.9 1017.0,592.7 1017.5,595.8 1018.0,598.3 1018.5,599.9 1019.0,600.3 1019.5,600.3 1020.0,600.3 1020.5,600.3 1021.0,600.3 1021.5,600.3 1022.0,600.3 1022.5,600.3 1023.0,600.3 1023.5,600.3 1024.0,600.3 1024.5,600.3 1025.0,600.3 1025.5,600.3 1026.0,600.3 1026.5,600.3 1027.0,600.3 1027.5,600.3 1028.0,600.3 1028.5,600.3 1029.0,600.3 1029.5,600.3 1030.0,600.3 1030.5,600.3 1031.0,600.3 1031.5,600.3 1032.0,600.1 1032.5,598.6 1033.0,596.3 1033.5,593.3 1034.0,589.6 1034.5,585.5 1035.0,580.9 1035.5,576.0 1036.0,570.9 1036.5,565.7 1037.0,560.5 1037.5,555.4 1038.0,550.5 1038.5,546.0 1039.0,541.8 1039.5,538.1 1040.0,535.0 1040.5,532.6 1041.0,530.8 1041.5,529.7 1042.0,529.4 1042.5,529.8 1043.0,531.0 1043.5,532.9 1044.0,535.5 1044.5,538.7 1045.0,542.4 1045.5,546.7 1046.0,551.3 1046.5,556.2 1047.0,561.3 1047.5,566.6 1048.0,571.8 1048.5,576.8 1049.0,581.7 1049.5,586.2 1050.0,590.3 1050.5,593.8 1051.0,596.7 1051.5,598.9 1052.0,600.2 1052.5,600.3 1053.0,600.3 1053.5,600.3 1054.0,600.3 1054.5,600.3 1055.0,600.3 1055.5,600.3 1056.0,600.3 1056.5,600.3 1057.0,600.3 1057.5,600.3 1058.0,600.3 1058.5,600.3 1059.0,600.3 1059.5,600.3 1060.0,600.3 1060.5,600.3 1061.0,600.3 1061.5,600.3 1062.0,600.3 1062.5,600.3 1063.0,600.3 1063.5,600.3 1064.0,600.3 1064.5,600.3 1065.0,600.3 1065.5,599.7 1066.0,597.9 1066.5,595.3 1067.0,592.1 1067.5,588.3 1068.0,584.0 1068.5,579.3 1069.0,574.3 1069.5,569.2 1070.0,563.9 1070.5,558.8 1071.0,553.7 1071.5,548.9 1072.0,544.5 1072.5,540.5 1073.0,537.0 1073.5,534.1 1074.0,531.9 1074.5,530.3 1075.0,529.5 1075.5,529.5 1076.0,530.2 1076.5,531.6 1077.0,533.7 1077.5,536.5 1078.0,539.9 1078.5,543.8 1079.0,548.2 1079.5,552.9 1080.0,557.9 1080.5,563.1 1081.0,568.3 1081.5,573.5 1082.0,578.5 1082.5,583.2 1083.0,587.6 1083.5,591.5 1084.0,594.9 1084.5,597.6 1085.0,599.5 1085.5,600.3 1086.0,600.3 1086.5,600.3 1087.0,600.3 1087.5,600.3 1088.0,600.3 1088.5,600.3 1089.0,600.3 1089.5,600.3 1090.0,600.3 1090.5,600.3 1091.0,600.3 1091.5,600.3 1092.0,600.3 1092.5,600.3 1093.0,600.3 1093.5,600.3 1094.0,600.3 1094.5,600.3 1095.0,600.3 1095.5,600.3 1096.0,600.3 1096.5,600.3 1097.0,600.3 1097.5,600.3 1098.0,600.3 1098.5,600.3 1099.0,599.2 1099.5,597.1 1100.0,594.3 1100.5,590.9 1101.0,586.9 1101.5,582.4 1102.0,577.6 1102.5,572.6 1103.0,567.4 1103.5,562.2 1104.0,557.0 1104.5,552.1 1105.0,547.4 1105.5,543.1 1106.0,539.2 1106.5,536.0 1107.0,533.3 1107.5,531.3 1108.0,530.0 1108.5,529.4 1109.0,529.6 1109.5,530.6 1110.0,532.2 1110.5,534.6 1111.0,537.6 1111.5,541.2 1112.0,545.3 1112.5,549.8 1113.0,554.6 1113.5,559.7 1114.0,564.9 1114.5,570.1 1115.0,575.2 1115.5,580.2 1116.0,584.8 1116.5,589.0 1117.0,592.7 1117.5,595.9 1118.0,598.3 1118.5,599.9 1119.0,600.3 1119.5,600.3 1120.0,600.3 1120.5,600.3 1121.0,600.3 1121.5,600.3 1122.0,600.3 1122.5,600.3 1123.0,600.3 1123.5,600.3 1124.0,600.3 1124.5,600.3 1125.0,600.3 1125.5,600.3 1126.0,600.3 1126.5,600.3 1127.0,600.3 1127.5,600.3 1128.0,600.3 1128.5,600.3 1129.0,600.3 1129.5,600.3 1130.0,600.3 1130.5,600.3 1131.0,600.3 1131.5,600.3 1132.0,600.0 1132.5,598.6 1133.0,596.3 1133.5,593.2 1134.0,589.6 1134.5,585.4 1135.0,580.8 1135.5,575.9 1136.0,570.8 1136.5,565.6 1137.0,560.4 1137.5,555.3 1138.0,550.4 1138.5,545.9 1139.0,541.7 1139.5,538.1 1140.0,535.0 1140.5,532.5 1141.0,530.7 1141.5,529.7 1142.0,529.4 1142.5,529.9 1143.0,531.0 1143.5,533.0 1144.0,535.5 1144.5,538.7 1145.0,542.5 1145.5,546.8 1146.0,551.4 1146.5,556.3 1147.0,561.5 1147.5,566.7 1148.0,571.9 1148.5,576.9 1149.0,581.8 1149.5,586.3 1150.0,590.3 1150.5,593.9 1151.0,596.8 1151.5,599.0 1152.0,600.2 1152.5,600.3 1153.0,600.3 1153.5,600.3 1154.0,600.3 1154.5,600.3 1155.0,600.3 1155.5,600.3 1156.0,600.3 1156.5,600.3 1157.0,600.3 1157.5,600.3 1158.0,600.3 1158.5,600.3 1159.0,600.3 1159.5,600.3 1160.0,600.3 1160.5,600.3 1161.0,600.3 1161.5,600.3 1162.0,600.3 1162.5,600.3 1163.0,600.3 1163.5,600.3 1164.0,600.3 1164.5,600.3 1165.0,600.3 1165.5,599.7 1166.0,597.9 1166.5,595.3 1167.0,592.0 1167.5,588.2 1168.0,583.9 1168.5,579.2 1169.0,574.2 1169.5,569.1 1170.0,563.8 1170.5,558.7 1171.0,553.6 1171.5,548.8 1172.0,544.4 1172.5,540.4 1173.0,536.9 1173.5,534.1 1174.0,531.8 1174.5,530.3 1175.0,529.5 1175.5,529.5 1176.0,530.2 1176.5,531.6 1177.0,533.8 1177.5,536.6 1178.0,540.0 1178.5,543.9 1179.0,548.3 1179.5,553.0 1180.0,558.1 1180.5,563.2 1181.0,568.4 1181.5,573.6 1182.0,578.6 1182.5,583.3 1183.0,587.7 1183.5,591.6 1184.0,594.9 1184.5,597.6 1185.0,599.5 1185.5,600.3 1186.0,600.3 1186.5,600.3 1187.0,600.3 1187.5,600.3 1188.0,600.3 1188.5,600.3 1189.0,600.3 1189.5,600.3 1190.0,600.3 1190.5,600.3 1191.0,600.3 1191.5,600.3 1192.0,600.3 1192.5,600.3 1193.0,600.3 1193.5,600.3 1194.0,600.3 1194.5,600.3 1195.0,600.3 1195.5,600.3 1196.0,600.3 1196.5,600.3 1197.0,600.3 1197.5,600.3 1198.0,600.3 1198.5,600.3 1199.0,599.2 1199.5,597.1 1200.0,594.3 1200.5,590.8 1201.0,586.8 1201.5,582.3 1202.0,577.5 1202.5,572.5 1203.0,567.3 1203.5,562.1 1204.0,556.9 1204.5,552.0 1205.0,547.3 1205.5,543.0 1206.0,539.2 1206.5,535.9 1207.0,533.2 1207.5,531.2 1208.0,530.0 1208.5,529.4 1209.0,529.6 1209.5,530.6 1210.0,532.3 1210.5,534.6 1211.0,537.7 1211.5,541.3 1212.0,545.4 1212.5,549.9 1213.0,554.7 1213.5,559.8 1214.0,565.0 1214.5,570.2 1215.0,575.3 1215.5,580.2 1216.0,584.9 1216.5,589.1 1217.0,592.8 1217.5,595.9 1218.0,598.3 1218.5,599.9 1219.0,600.3 1219.5,600.3 1220.0,600.3 1220.5,600.3 1221.0,600.3 1221.5,600.3 1222.0,600.3 1222.5,600.3 1223.0,600.3 1223.5,600.3 1224.0,600.3 1224.5,600.3 1225.0,600.3 1225.5,600.3 1226.0,600.3 1226.5,600.3 1227.0,600.3 1227.5,600.3 1228.0,600.3 1228.5,600.3 1229.0,600.3 1229.5,600.3 1230.0,600.3 1230.5,600.3 1231.0,600.3 1231.5,600.3 1232.0,600.0 1232.5,598.5 1233.0,596.2 1233.5,593.1 1234.0,589.5 1234.5,585.3 1235.0,580.7 1235.5,575.8 1236.0,570.7 1236.5,565.5 1237.0,560.3 1237.5,555.2 1238.0,550.3 1238.5,545.8 1239.0,541.6 1239.5,538.0 1240.0,534.9 1240.5,532.5 1241.0,530.7 1241.5,529.7 1242.0,529.4 1242.5,529.9 1243.0,531.1 1243.5,533.0 1244.0,535.6 1244.5,538.8 1245.0,542.6 1245.5,546.8 1246.0,551.5 1246.5,556.4 1247.0,561.6 1247.5,566.8 1248.0,572.0 1248.5,577.0 1249.0,581.9 1249.5,586.3 1250.0,590.4 1250.5,593.9 1251.0,596.8 1251.5,599.0 1252.0,600.2 1252.5,600.3 1253.0,600.3 1253.5,600.3 1254.0,600.3 1254.5,600.3 1255.0,600.3 1255.5,600.3 1256.0,600.3 1256.5,600.3 1257.0,600.3 1257.5,600.3 1258.0,600.3 1258.5,600.3 1259.0,600.3 1259.5,600.3 1260.0,600.3 1260.5,600.3 1261.0,600.3 1261.5,600.3 1262.0,600.3 1262.5,600.3 1263.0,600.3 1263.5,600.3 1264.0,600.3 1264.5,600.3 1265.0,600.3 1265.5,599.6 1266.0,597.8 1266.5,595.2 1267.0,592.0 1267.5,588.1 1268.0,583.8 1268.5,579.1 1269.0,574.1 1269.5,569.0 1270.0,563.7 1270.5,558.6 1271.0,553.5 1271.5,548.8 1272.0,544.3 1272.5,540.3 1273.0,536.9 1273.5,534.0 1274.0,531.8 1274.5,530.3 1275.0,529.5 1275.5,529.5 1276.0,530.2 1276.5,531.7 1277.0,533.8 1277.5,536.6 1278.0,540.0 1278.5,544.0 1279.0,548.4 1279.5,553.1 1280.0,558.2 1280.5,563.3 1281.0,568.5 1281.5,573.7 1282.0,578.7 1282.5,583.4 1283.0,587.8 1283.5,591.7 1284.0,595.0 1284.5,597.7 1285.0,599.5 1285.5,600.3 1286.0,600.3 1286.5,600.3 1287.0,600.3 1287.5,600.3 1288.0,600.3 1288.5,600.3 1289.0,600.3 1289.5,600.3 1290.0,600.3 1290.5,600.3 1291.0,600.3 1291.5,600.3 1292.0,600.3 1292.5,600.3 1293.0,600.3 1293.5,600.3 1294.0,600.3 1294.5,600.3 1295.0,600.3 1295.5,600.3 1296.0,600.3 1296.5,600.3 1297.0,600.3 1297.5,600.3 1298.0,600.3 1298.5,600.3 1299.0,599.1 1299.5,597.0 1300.0,594.2 1300.5,590.7 1301.0,586.7 1301.5,582.2 1302.0,577.4 1302.5,572.4 1303.0,567.2 1303.5,562.0 1304.0,556.8 1304.5,551.9 1305.0,547.2 1305.5,542.9 1306.0,539.1 1306.5,535.8 1307.0,533.2 1307.5,531.2 1308.0,529.9 1308.5,529.4 1309.0,529.6 1309.5,530.6 1310.0,532.3 1310.5,534.7 1311.0,537.7 1311.5,541.3 1312.0,545.4 1312.5,550.0 1313.0,554.8 1313.5,559.9 1314.0,565.1 1314.5,570.3 1315.0,575.4 1315.5,580.3 1316.0,585.0 1316.5,589.2 1317.0,592.9 1317.5,596.0 1318.0,598.4 1318.5,599.9 1319.0,600.3 1319.5,600.3 1320.0,600.3 1320.5,600.3 1321.0,600.3 1321.5,600.3 1322.0,600.3 1322.5,600.3 1323.0,600.3 1323.5,600.3 1324.0,600.3 1324.5,600.3 1325.0,600.3 1325.5,600.3 1326.0,600.3 1326.5,600.3 1327.0,600.3 1327.5,600.3 1328.0,600.3 1328.5,600.3 1329.0,600.3 1329.5,600.3 1330.0,600.3 1330.5,600.3 1331.0,600.3 1331.5,600.3 1332.0,600.0 1332.5,598.5 1333.0,596.1 1333.5,593.1 1334.0,589.4 1334.5,585.2 1335.0,580.6 1335.5,575.7 1336.0,570.6 1336.5,565.4 1337.0,560.2 1337.5,555.1 1338.0,550.3 1338.5,545.7 1339.0,541.6 1339.5,537.9 1340.0,534.9 1340.5,532.4 1341.0,530.7 1341.5,529.7 1342.0,529.4 1342.5,529.9 1343.0,531.1 1343.5,533.0 1344.0,535.7 1344.5,538.9 1345.0,542.7 1345.5,546.9 1346.0,551.6 1346.5,556.5 1347.0,561.7 1347.5,566.9 1348.0,572.1 1348.5,577.1 1349.0,581.9 1349.5,586.4 1350.0,590.5 1350.5,594.0 1351.0,596.9 1351.5,599.0 1352.0,600.2 1352.5,600.3 1353.0,600.3 1353.5,600.3 1354.0,600.3 1354.5,600.3 1355.0,600.3 1355.5,600.3 1356.0,600.3 1356.5,600.3 1357.0,600.3 1357.5,600.3 1358.0,600.3 1358.5,600.3 1359.0,600.3 1359.5,600.3 1360.0,600.3 1360.5,600.3 1361.0,600.3 1361.5,600.3 1362.0,600.3 1362.5,600.3 1363.0,600.3 1363.5,600.3 1364.0,600.3 1364.5,600.3 1365.0,600.3 1365.5,599.6 1366.0,597.8 1366.5,595.2 1367.0,591.9 1367.5,588.0 1368.0,583.7 1368.5,579.0 1369.0,574.0 1369.5,568.9 1370.0,563.6 1370.5,558.5 1371.0,553.4 1371.5,548.7 1372.0,544.2 1372.5,540.3 1373.0,536.8 1373.5,534.0 1374.0,531.8 1374.5,530.3 1375.0,529.5 1375.5,529.5 1376.0,530.2 1376.5,531.7 1377.0,533.9 1377.5,536.7 1378.0,540.1 1378.5,544.1 1379.0,548.5 1379.5,553.2 1380.0,558.3 1380.5,563.4 1381.0,568.6 1381.5,573.8 1382.0,578.8 1382.5,583.5 1383.0,587.9 1383.5,591.7 1384.0,595.1 1384.5,597.7 1385.0,599.6 1385.5,600.3 1386.0,600.3 1386.5,600.3 1387.0,600.3 1387.5,600.3 1388.0,600.3 1388.5,600.3 1389.0,600.3 1389.5,600.3" fill="none" stroke="#88f020" stroke-width="1.1"/><polyline points="970.5,630.7 971.0,633.4 971.5,636.1 972.0,638.6 972.5,640.9 973.0,642.9 973.5,644.6 974.0,646.0 974.5,646.9 975.0,647.4 975.5,647.5 976.0,647.1 976.5,646.2 977.0,644.9 977.5,643.3 978.0,641.3 978.5,639.1 979.0,636.6 979.5,633.9 980.0,631.2 980.5,628.5 981.0,625.8 981.5,623.3 982.0,620.9 982.5,618.7 983.0,616.7 983.5,615.1 984.0,613.7 984.5,612.5 985.0,611.7 985.5,611.1 986.0,610.7 986.5,610.5 987.0,610.5 987.5,610.5 988.0,610.5 988.5,610.5 989.0,610.5 989.5,610.5 990.0,610.5 990.5,610.5 991.0,610.5 991.5,610.5 992.0,610.5 992.5,610.5 993.0,610.5 993.5,610.5 994.0,610.5 994.5,610.5 995.0,610.5 995.5,610.5 996.0,610.5 996.5,610.5 997.0,610.5 997.5,610.6 998.0,610.8 998.5,611.2 999.0,611.8 999.5,612.7 1000.0,613.8 1000.5,615.3 1001.0,617.0 1001.5,619.0 1002.0,621.2 1002.5,623.6 1003.0,626.2 1003.5,628.9 1004.0,631.6 1004.5,634.3 1005.0,636.9 1005.5,639.4 1006.0,641.6 1006.5,643.5 1007.0,645.1 1007.5,646.4 1008.0,647.1 1008.5,647.5 1009.0,647.4 1009.5,646.8 1010.0,645.8 1010.5,644.4 1011.0,642.7 1011.5,640.6 1012.0,638.2 1012.5,635.7 1013.0,633.0 1013.5,630.3 1014.0,627.6 1014.5,624.9 1015.0,622.4 1015.5,620.1 1016.0,618.0 1016.5,616.1 1017.0,614.5 1017.5,613.2 1018.0,612.2 1018.5,611.5 1019.0,610.9 1019.5,610.6 1020.0,610.5 1020.5,610.5 1021.0,610.5 1021.5,610.5 1022.0,610.5 1022.5,610.5 1023.0,610.5 1023.5,610.5 1024.0,610.5 1024.5,610.5 1025.0,610.5 1025.5,610.5 1026.0,610.5 1026.5,610.5 1027.0,610.5 1027.5,610.5 1028.0,610.5 1028.5,610.5 1029.0,610.5 1029.5,610.5 1030.0,610.5 1030.5,610.5 1031.0,610.6 1031.5,610.9 1032.0,611.4 1032.5,612.1 1033.0,613.0 1033.5,614.3 1034.0,615.8 1034.5,617.6 1035.0,619.7 1035.5,622.0 1036.0,624.5 1036.5,627.1 1037.0,629.8 1037.5,632.5 1038.0,635.2 1038.5,637.8 1039.0,640.2 1039.5,642.3 1040.0,644.1 1040.5,645.6 1041.0,646.7 1041.5,647.3 1042.0,647.5 1042.5,647.2 1043.0,646.5 1043.5,645.4 1044.0,643.9 1044.5,642.0 1045.0,639.8 1045.5,637.4 1046.0,634.8 1046.5,632.1 1047.0,629.4 1047.5,626.7 1048.0,624.1 1048.5,621.6 1049.0,619.4 1049.5,617.3 1050.0,615.6 1050.5,614.1 1051.0,612.9 1051.5,611.9 1052.0,611.3 1052.5,610.8 1053.0,610.6 1053.5,610.5 1054.0,610.5 1054.5,610.5 1055.0,610.5 1055.5,610.5 1056.0,610.5 1056.5,610.5 1057.0,610.5 1057.5,610.5 1058.0,610.5 1058.5,610.5 1059.0,610.5 1059.5,610.5 1060.0,610.5 1060.5,610.5 1061.0,610.5 1061.5,610.5 1062.0,610.5 1062.5,610.5 1063.0,610.5 1063.5,610.5 1064.0,610.5 1064.5,610.7 1065.0,611.0 1065.5,611.6 1066.0,612.4 1066.5,613.4 1067.0,614.8 1067.5,616.4 1068.0,618.3 1068.5,620.5 1069.0,622.8 1069.5,625.4 1070.0,628.0 1070.5,630.7 1071.0,633.5 1071.5,636.1 1072.0,638.6 1072.5,640.9 1073.0,643.0 1073.5,644.7 1074.0,646.0 1074.5,646.9 1075.0,647.4 1075.5,647.5 1076.0,647.0 1076.5,646.2 1077.0,644.9 1077.5,643.3 1078.0,641.3 1078.5,639.0 1079.0,636.5 1079.5,633.9 1080.0,631.2 1080.5,628.5 1081.0,625.8 1081.5,623.2 1082.0,620.8 1082.5,618.6 1083.0,616.7 1083.5,615.0 1084.0,613.6 1084.5,612.5 1085.0,611.7 1085.5,611.1 1086.0,610.7 1086.5,610.5 1087.0,610.5 1087.5,610.5 1088.0,610.5 1088.5,610.5 1089.0,610.5 1089.5,610.5 1090.0,610.5 1090.5,610.5 1091.0,610.5 1091.5,610.5 1092.0,610.5 1092.5,610.5 1093.0,610.5 1093.5,610.5 1094.0,610.5 1094.5,610.5 1095.0,610.5 1095.5,610.5 1096.0,610.5 1096.5,610.5 1097.0,610.5 1097.5,610.6 1098.0,610.8 1098.5,611.2 1099.0,611.8 1099.5,612.7 1100.0,613.9 1100.5,615.3 1101.0,617.0 1101.5,619.0 1102.0,621.2 1102.5,623.7 1103.0,626.3 1103.5,628.9 1104.0,631.7 1104.5,634.4 1105.0,637.0 1105.5,639.4 1106.0,641.6 1106.5,643.6 1107.0,645.2 1107.5,646.4 1108.0,647.2 1108.5,647.5 1109.0,647.4 1109.5,646.8 1110.0,645.8 1110.5,644.4 1111.0,642.6 1111.5,640.5 1112.0,638.2 1112.5,635.6 1113.0,633.0 1113.5,630.3 1114.0,627.5 1114.5,624.9 1115.0,622.4 1115.5,620.1 1116.0,618.0 1116.5,616.1 1117.0,614.5 1117.5,613.2 1118.0,612.2 1118.5,611.4 1119.0,610.9 1119.5,610.6 1120.0,610.5 1120.5,610.5 1121.0,610.5 1121.5,610.5 1122.0,610.5 1122.5,610.5 1123.0,610.5 1123.5,610.5 1124.0,610.5 1124.5,610.5 1125.0,610.5 1125.5,610.5 1126.0,610.5 1126.5,610.5 1127.0,610.5 1127.5,610.5 1128.0,610.5 1128.5,610.5 1129.0,610.5 1129.5,610.5 1130.0,610.5 1130.5,610.5 1131.0,610.6 1131.5,610.9 1132.0,611.4 1132.5,612.1 1133.0,613.1 1133.5,614.3 1134.0,615.9 1134.5,617.7 1135.0,619.8 1135.5,622.1 1136.0,624.5 1136.5,627.2 1137.0,629.9 1137.5,632.6 1138.0,635.3 1138.5,637.8 1139.0,640.2 1139.5,642.3 1140.0,644.2 1140.5,645.6 1141.0,646.7 1141.5,647.3 1142.0,647.5 1142.5,647.2 1143.0,646.5 1143.5,645.4 1144.0,643.8 1144.5,641.9 1145.0,639.8 1145.5,637.3 1146.0,634.7 1146.5,632.1 1147.0,629.3 1147.5,626.6 1148.0,624.0 1148.5,621.6 1149.0,619.3 1149.5,617.3 1150.0,615.5 1150.5,614.0 1151.0,612.8 1151.5,611.9 1152.0,611.2 1152.5,610.8 1153.0,610.6 1153.5,610.5 1154.0,610.5 1154.5,610.5 1155.0,610.5 1155.5,610.5 1156.0,610.5 1156.5,610.5 1157.0,610.5 1157.5,610.5 1158.0,610.5 1158.5,610.5 1159.0,610.5 1159.5,610.5 1160.0,610.5 1160.5,610.5 1161.0,610.5 1161.5,610.5 1162.0,610.5 1162.5,610.5 1163.0,610.5 1163.5,610.5 1164.0,610.5 1164.5,610.7 1165.0,611.0 1165.5,611.6 1166.0,612.4 1166.5,613.5 1167.0,614.8 1167.5,616.5 1168.0,618.4 1168.5,620.5 1169.0,622.9 1169.5,625.4 1170.0,628.1 1170.5,630.8 1171.0,633.5 1171.5,636.2 1172.0,638.7 1172.5,641.0 1173.0,643.0 1173.5,644.7 1174.0,646.0 1174.5,646.9 1175.0,647.4 1175.5,647.5 1176.0,647.0 1176.5,646.2 1177.0,644.9 1177.5,643.2 1178.0,641.2 1178.5,639.0 1179.0,636.5 1179.5,633.8 1180.0,631.1 1180.5,628.4 1181.0,625.7 1181.5,623.2 1182.0,620.8 1182.5,618.6 1183.0,616.7 1183.5,615.0 1184.0,613.6 1184.5,612.5 1185.0,611.7 1185.5,611.1 1186.0,610.7 1186.5,610.5 1187.0,610.5 1187.5,610.5 1188.0,610.5 1188.5,610.5 1189.0,610.5 1189.5,610.5 1190.0,610.5 1190.5,610.5 1191.0,610.5 1191.5,610.5 1192.0,610.5 1192.5,610.5 1193.0,610.5 1193.5,610.5 1194.0,610.5 1194.5,610.5 1195.0,610.5 1195.5,610.5 1196.0,610.5 1196.5,610.5 1197.0,610.5 1197.5,610.6 1198.0,610.8 1198.5,611.2 1199.0,611.8 1199.5,612.7 1200.0,613.9 1200.5,615.3 1201.0,617.1 1201.5,619.1 1202.0,621.3 1202.5,623.7 1203.0,626.3 1203.5,629.0 1204.0,631.7 1204.5,634.4 1205.0,637.0 1205.5,639.5 1206.0,641.7 1206.5,643.6 1207.0,645.2 1207.5,646.4 1208.0,647.2 1208.5,647.5 1209.0,647.4 1209.5,646.8 1210.0,645.8 1210.5,644.4 1211.0,642.6 1211.5,640.5 1212.0,638.1 1212.5,635.6 1213.0,632.9 1213.5,630.2 1214.0,627.5 1214.5,624.8 1215.0,622.3 1215.5,620.0 1216.0,617.9 1216.5,616.1 1217.0,614.5 1217.5,613.2 1218.0,612.2 1218.5,611.4 1219.0,610.9 1219.5,610.6 1220.0,610.5 1220.5,610.5 1221.0,610.5 1221.5,610.5 1222.0,610.5 1222.5,610.5 1223.0,610.5 1223.5,610.5 1224.0,610.5 1224.5,610.5 1225.0,610.5 1225.5,610.5 1226.0,610.5 1226.5,610.5 1227.0,610.5 1227.5,610.5 1228.0,610.5 1228.5,610.5 1229.0,610.5 1229.5,610.5 1230.0,610.5 1230.5,610.5 1231.0,610.6 1231.5,610.9 1232.0,611.4 1232.5,612.1 1233.0,613.1 1233.5,614.3 1234.0,615.9 1234.5,617.7 1235.0,619.8 1235.5,622.1 1236.0,624.6 1236.5,627.2 1237.0,629.9 1237.5,632.7 1238.0,635.3 1238.5,637.9 1239.0,640.3 1239.5,642.4 1240.0,644.2 1240.5,645.6 1241.0,646.7 1241.5,647.3 1242.0,647.5 1242.5,647.2 1243.0,646.5 1243.5,645.3 1244.0,643.8 1244.5,641.9 1245.0,639.7 1245.5,637.3 1246.0,634.7 1246.5,632.0 1247.0,629.3 1247.5,626.6 1248.0,624.0 1248.5,621.5 1249.0,619.3 1249.5,617.3 1250.0,615.5 1250.5,614.0 1251.0,612.8 1251.5,611.9 1252.0,611.2 1252.5,610.8 1253.0,610.6 1253.5,610.5 1254.0,610.5 1254.5,610.5 1255.0,610.5 1255.5,610.5 1256.0,610.5 1256.5,610.5 1257.0,610.5 1257.5,610.5 1258.0,610.5 1258.5,610.5 1259.0,610.5 1259.5,610.5 1260.0,610.5 1260.5,610.5 1261.0,610.5 1261.5,610.5 1262.0,610.5 1262.5,610.5 1263.0,610.5 1263.5,610.5 1264.0,610.5 1264.5,610.7 1265.0,611.0 1265.5,611.6 1266.0,612.4 1266.5,613.5 1267.0,614.8 1267.5,616.5 1268.0,618.4 1268.5,620.6 1269.0,622.9 1269.5,625.5 1270.0,628.1 1270.5,630.9 1271.0,633.6 1271.5,636.2 1272.0,638.7 1272.5,641.0 1273.0,643.0 1273.5,644.7 1274.0,646.1 1274.5,647.0 1275.0,647.4 1275.5,647.5 1276.0,647.0 1276.5,646.1 1277.0,644.9 1277.5,643.2 1278.0,641.2 1278.5,638.9 1279.0,636.4 1279.5,633.8 1280.0,631.1 1280.5,628.3 1281.0,625.7 1281.5,623.1 1282.0,620.7 1282.5,618.6 1283.0,616.6 1283.5,615.0 1284.0,613.6 1284.5,612.5 1285.0,611.6 1285.5,611.1 1286.0,610.7 1286.5,610.5 1287.0,610.5 1287.5,610.5 1288.0,610.5 1288.5,610.5 1289.0,610.5 1289.5,610.5 1290.0,610.5 1290.5,610.5 1291.0,610.5 1291.5,610.5 1292.0,610.5 1292.5,610.5 1293.0,610.5 1293.5,610.5 1294.0,610.5 1294.5,610.5 1295.0,610.5 1295.5,610.5 1296.0,610.5 1296.5,610.5 1297.0,610.5 1297.5,610.6 1298.0,610.8 1298.5,611.2 1299.0,611.8 1299.5,612.7 1300.0,613.9 1300.5,615.4 1301.0,617.1 1301.5,619.1 1302.0,621.3 1302.5,623.8 1303.0,626.4 1303.5,629.1 1304.0,631.8 1304.5,634.5 1305.0,637.1 1305.5,639.5 1306.0,641.7 1306.5,643.7 1307.0,645.2 1307.5,646.4 1308.0,647.2 1308.5,647.5 1309.0,647.4 1309.5,646.8 1310.0,645.7 1310.5,644.3 1311.0,642.5 1311.5,640.4 1312.0,638.1 1312.5,635.5 1313.0,632.9 1313.5,630.1 1314.0,627.4 1314.5,624.8 1315.0,622.3 1315.5,620.0 1316.0,617.9 1316.5,616.0 1317.0,614.5 1317.5,613.2 1318.0,612.2 1318.5,611.4 1319.0,610.9 1319.5,610.6 1320.0,610.5 1320.5,610.5 1321.0,610.5 1321.5,610.5 1322.0,610.5 1322.5,610.5 1323.0,610.5 1323.5,610.5 1324.0,610.5 1324.5,610.5 1325.0,610.5 1325.5,610.5 1326.0,610.5 1326.5,610.5 1327.0,610.5 1327.5,610.5 1328.0,610.5 1328.5,610.5 1329.0,610.5 1329.5,610.5 1330.0,610.5 1330.5,610.5 1331.0,610.6 1331.5,610.9 1332.0,611.4 1332.5,612.1 1333.0,613.1 1333.5,614.4 1334.0,615.9 1334.5,617.8 1335.0,619.8 1335.5,622.1 1336.0,624.6 1336.5,627.3 1337.0,630.0 1337.5,632.7 1338.0,635.4 1338.5,637.9 1339.0,640.3 1339.5,642.4 1340.0,644.2 1340.5,645.7 1341.0,646.7 1341.5,647.3 1342.0,647.5 1342.5,647.2 1343.0,646.5 1343.5,645.3 1344.0,643.8 1344.5,641.9 1345.0,639.7 1345.5,637.2 1346.0,634.6 1346.5,631.9 1347.0,629.2 1347.5,626.5 1348.0,623.9 1348.5,621.5 1349.0,619.2 1349.5,617.2 1350.0,615.5 1350.5,614.0 1351.0,612.8 1351.5,611.9 1352.0,611.2 1352.5,610.8 1353.0,610.6 1353.5,610.5 1354.0,610.5 1354.5,610.5 1355.0,610.5 1355.5,610.5 1356.0,610.5 1356.5,610.5 1357.0,610.5 1357.5,610.5 1358.0,610.5 1358.5,610.5 1359.0,610.5 1359.5,610.5 1360.0,610.5 1360.5,610.5 1361.0,610.5 1361.5,610.5 1362.0,610.5 1362.5,610.5 1363.0,610.5 1363.5,610.5 1364.0,610.5 1364.5,610.7 1365.0,611.0 1365.5,611.6 1366.0,612.4 1366.5,613.5 1367.0,614.9 1367.5,616.5 1368.0,618.4 1368.5,620.6 1369.0,623.0 1369.5,625.5 1370.0,628.2 1370.5,630.9 1371.0,633.6 1371.5,636.3 1372.0,638.8 1372.5,641.1 1373.0,643.1 1373.5,644.8 1374.0,646.1 1374.5,647.0 1375.0,647.4 1375.5,647.4 1376.0,647.0 1376.5,646.1 1377.0,644.8 1377.5,643.1 1378.0,641.1 1378.5,638.9 1379.0,636.4 1379.5,633.7 1380.0,631.0 1380.5,628.3 1381.0,625.6 1381.5,623.1 1382.0,620.7 1382.5,618.5 1383.0,616.6 1383.5,614.9 1384.0,613.6 1384.5,612.5 1385.0,611.6 1385.5,611.1 1386.0,610.7 1386.5,610.5 1387.0,610.5 1387.5,610.5 1388.0,610.5 1388.5,610.5 1389.0,610.5 1389.5,610.5" fill="none" stroke="#ff1818" stroke-width="1.1"/><line x1="970.5" y1="442" x2="970.5" y2="834" stroke="#00ff40" stroke-width="1.5"/><polygon points="962,434 979,434 970.5,443" fill="#ff00ff"/><rect x="962" y="434" width="17" height="2" fill="#00e0ff"/><rect x="968.5" y="436" width="4" height="5" fill="#ff0"/><circle cx="970.5" cy="628.7" r="4" fill="none" stroke="#ff00ff" stroke-width="1.5"/></svg>
<svg class="a" style="left:964px;top:847px;" width="10" height="12" viewBox="0 0 10 12"><path d="M7 2l-4 4 4 4" fill="none" stroke="#555" stroke-width="1.5"/></svg>
<div class="a" style="left:979px;top:847px;width:1px;height:18px;background:#d8d8d8"></div>
<div class="a" style="left:1738px;top:847px;width:47px;height:12px;background:#cdcdcd"></div>
<svg class="a" style="left:1791px;top:847px;" width="10" height="12" viewBox="0 0 10 12"><path d="M3 2l4 4-4 4" fill="none" stroke="#555" stroke-width="1.5"/></svg>
<div class="a" style="left:960px;top:866px;width:68px;height:72px;border:1px solid;border-color:#fff #a0a0a0 #a0a0a0 #fff;background:#f0f0f0"></div>
<div class="t" style="left:966.00px;top:877.61px;font-size:12.3px;">T1</div>
<div class="t" style="left:966.00px;top:895.61px;font-size:12.3px;">T2</div>
<div class="t" style="left:966.00px;top:919.61px;font-size:12.3px;">T2-T1</div>
<div class="btn" style="left:989px;top:874px;width:16px;height:19px"></div>
<svg class="a" style="left:990px;top:878px;" width="15" height="12" viewBox="0 0 15 12"><path d="M1 6l6-5v3h7v4h-7v3z" fill="#000"/></svg>
<div class="btn" style="left:1008px;top:874px;width:16px;height:19px"></div>
<svg class="a" style="left:1009px;top:878px;" width="15" height="12" viewBox="0 0 15 12"><path d="M14 6l-6-5v3h-7v4h7v3z" fill="#000"/></svg>
<div class="btn" style="left:989px;top:896px;width:16px;height:19px"></div>
<svg class="a" style="left:990px;top:900px;" width="15" height="12" viewBox="0 0 15 12"><path d="M1 6l6-5v3h7v4h-7v3z" fill="#000"/></svg>
<div class="btn" style="left:1008px;top:896px;width:16px;height:19px"></div>
<svg class="a" style="left:1009px;top:900px;" width="15" height="12" viewBox="0 0 15 12"><path d="M14 6l-6-5v3h-7v4h7v3z" fill="#000"/></svg>
<div class="a" style="left:1030px;top:866px;width:592px;height:72px;background:#fff;border:2px solid;border-color:#7a7a7a #f0f0f0 #f0f0f0 #7a7a7a"></div>
<div class="t" style="left:1051.50px;top:869.61px;font-size:12.3px;">Время</div>
<div class="t" style="left:1047.00px;top:885.61px;font-size:12.3px;">8.552 ms</div>
<div class="t" style="left:1047.00px;top:901.61px;font-size:12.3px;">8.552 ms</div>
<div class="t" style="left:1051.50px;top:917.61px;font-size:12.3px;">0.000 s</div>
<div class="t" style="left:1139.50px;top:869.61px;font-size:12.3px;">Канал_A</div>
<div class="t" style="left:1139.50px;top:885.61px;font-size:12.3px;">15.611 mV</div>
<div class="t" style="left:1139.50px;top:901.61px;font-size:12.3px;">15.611 mV</div>
<div class="t" style="left:1147.50px;top:917.61px;font-size:12.3px;">0.000 V</div>
<div class="t" style="left:1235.50px;top:869.61px;font-size:12.3px;">Канал_B</div>
<div class="t" style="left:1235.50px;top:885.61px;font-size:12.3px;">54.169 mV</div>
<div class="t" style="left:1235.50px;top:901.61px;font-size:12.3px;">54.169 mV</div>
<div class="t" style="left:1243.50px;top:917.61px;font-size:12.3px;">0.000 V</div>
<div class="btn" style="left:1630px;top:874px;width:71px;height:26px"></div>
<div class="t" style="left:1630px;top:874px;width:71px;height:26px;font-size:12.3px;line-height:26px;text-align:center;color:#000">Экран</div>
<div class="btn" style="left:1630px;top:908px;width:71px;height:26px"></div>
<div class="t" style="left:1630px;top:908px;width:71px;height:26px;font-size:12.3px;line-height:26px;text-align:center;color:#000">Сохранить</div>
<div class="t" style="left:1712.00px;top:927.61px;font-size:12.3px;">Внешняя</div>
<div class="a" style="left:1769.5px;top:927.5px;width:15px;height:15px;border-radius:50%;background:#fff;border:2px solid #fff;box-shadow:0 0 0 1px #d4d4d4"></div>
<div class="a" style="left:960px;top:955px;width:193px;height:1px;background:#dcdcdc"></div>
<div class="t" style="left:965px;top:949px;padding:0 3px;font-size:12.3px;background:#f0f0f0">Развертка</div>
<div class="a" style="left:1157px;top:955px;width:1px;height:80px;background:#dcdcdc"></div>
<div class="a" style="left:1158px;top:955px;width:193px;height:1px;background:#dcdcdc"></div>
<div class="t" style="left:1164px;top:949px;padding:0 3px;font-size:12.3px;background:#f0f0f0">Канал A</div>
<div class="a" style="left:1352px;top:955px;width:1px;height:80px;background:#dcdcdc"></div>
<div class="a" style="left:1353px;top:955px;width:196px;height:1px;background:#dcdcdc"></div>
<div class="t" style="left:1358px;top:949px;padding:0 3px;font-size:12.3px;background:#f0f0f0">Канал B</div>
<div class="a" style="left:1550px;top:955px;width:1px;height:80px;background:#dcdcdc"></div>
<div class="a" style="left:1551px;top:955px;width:250px;height:1px;background:#dcdcdc"></div>
<div class="t" style="left:1556px;top:949px;padding:0 3px;font-size:12.3px;background:#f0f0f0">Синхронизация</div>
<div class="t" style="left:962.00px;top:971.61px;font-size:12.3px;">Шкала:</div>
<div class="tb" style="left:1034px;top:963px;width:117px;height:24px;"></div>
<div class="t" style="left:1039px;top:963px;height:24px;line-height:24px;font-size:12.3px">50 us/Div</div>
<div class="t" style="left:962.00px;top:995.61px;font-size:12.3px;">задержка X</div>
<div class="tb" style="left:1058px;top:989px;width:93px;height:24px;"></div>
<div class="t" style="left:1063px;top:989px;height:24px;line-height:24px;font-size:12.3px">0</div>
<div class="t" style="left:1162.00px;top:971.61px;font-size:12.3px;">Шкала</div>
<div class="tb" style="left:1228px;top:963px;width:121px;height:24px;"></div>
<div class="t" style="left:1233px;top:963px;height:24px;line-height:24px;font-size:12.3px">100 mV/Div</div>
<div class="t" style="left:1162.00px;top:995.61px;font-size:12.3px;">смещение Y</div>
<div class="tb" style="left:1258px;top:989px;width:91px;height:24px;"></div>
<div class="t" style="left:1263px;top:989px;height:24px;line-height:24px;font-size:12.3px">0</div>
<div class="t" style="left:1356.00px;top:971.61px;font-size:12.3px;">Шкала</div>
<div class="tb" style="left:1424px;top:963px;width:123px;height:24px;"></div>
<div class="t" style="left:1429px;top:963px;height:24px;line-height:24px;font-size:12.3px">50 mV/Div</div>
<div class="t" style="left:1356.00px;top:995.61px;font-size:12.3px;">смещение Y</div>
<div class="tb" style="left:1454px;top:989px;width:93px;height:24px;"></div>
<div class="t" style="left:1459px;top:989px;height:24px;line-height:24px;font-size:12.3px">0</div>
<div class="t" style="left:1555.00px;top:971.61px;font-size:12.3px;">Запуск</div>
<div class="sel" style="left:1623px;top:968px;width:26px;height:22px"></div>
<svg class="a" style="left:1627px;top:971px;" width="18" height="16" viewBox="0 0 18 16"><path d="M3 12h5v-9h5M5 8h7" fill="none" stroke="#000" stroke-width="1.3"/></svg>
<div class="btn" style="left:1652px;top:968px;width:25px;height:22px"></div>
<svg class="a" style="left:1656px;top:971px;" width="18" height="16" viewBox="0 0 18 16"><path d="M3 3h5v9h5M5 8h7" fill="none" stroke="#000" stroke-width="1.3"/></svg>
<div class="sel" style="left:1682px;top:968px;width:30px;height:22px"></div>
<div class="t" style="left:1682px;top:968px;width:30px;height:22px;font-size:12.3px;line-height:22px;text-align:center;color:#000">A</div>
<div class="dis" style="left:1715px;top:968px;width:28px;height:22px"></div>
<div class="t" style="left:1715px;top:968px;width:28px;height:22px;font-size:12.3px;line-height:22px;text-align:center;color:#8c8c8c">B</div>
<div class="dis" style="left:1745px;top:968px;width:47px;height:22px"></div>
<div class="t" style="left:1745px;top:968px;width:47px;height:22px;font-size:12.3px;line-height:22px;text-align:center;color:#8c8c8c">Внеш</div>
<div class="t" style="left:1555.00px;top:995.61px;font-size:12.3px;">Уровень</div>
<div class="tb" style="left:1622px;top:993px;width:138px;height:24px;"></div>
<div class="t" style="left:1627px;top:993px;height:24px;line-height:24px;font-size:12.3px">0</div>
<div class="tb" style="left:1759px;top:993px;width:34px;height:24px;"></div>
<div class="t" style="left:1769px;top:993px;height:24px;line-height:24px;font-size:12.3px">V</div>
<div class="sel" style="left:968px;top:1018px;width:41px;height:24px"></div>
<div class="t" style="left:968px;top:1018px;width:41px;height:24px;font-size:12.3px;line-height:24px;text-align:center;color:#000">Y/T</div>
<div class="btn" style="left:1012px;top:1018px;width:44px;height:24px"></div>
<div class="t" style="left:1012px;top:1018px;width:44px;height:24px;font-size:12.3px;line-height:24px;text-align:center;color:#000">Add</div>
<div class="btn" style="left:1058px;top:1018px;width:44px;height:24px"></div>
<div class="t" style="left:1058px;top:1018px;width:44px;height:24px;font-size:12.3px;line-height:24px;text-align:center;color:#000">B/A</div>
<div class="btn" style="left:1104px;top:1018px;width:46px;height:24px"></div>
<div class="t" style="left:1104px;top:1018px;width:46px;height:24px;font-size:12.3px;line-height:24px;text-align:center;color:#000">A/B</div>
<div class="btn" style="left:1162px;top:1018px;width:44px;height:24px"></div>
<div class="t" style="left:1162px;top:1018px;width:44px;height:24px;font-size:12.3px;line-height:24px;text-align:center;color:#000">AC</div>
<div class="btn" style="left:1206px;top:1018px;width:40px;height:24px"></div>
<div class="t" style="left:1206px;top:1018px;width:40px;height:24px;font-size:12.3px;line-height:24px;text-align:center;color:#000">0</div>
<div class="sel" style="left:1249px;top:1018px;width:40px;height:24px"></div>
<div class="t" style="left:1249px;top:1018px;width:40px;height:24px;font-size:12.3px;line-height:24px;text-align:center;color:#000">DC</div>
<div class="btn" style="left:1357px;top:1018px;width:42px;height:24px"></div>
<div class="t" style="left:1357px;top:1018px;width:42px;height:24px;font-size:12.3px;line-height:24px;text-align:center;color:#000">AC</div>
<div class="btn" style="left:1398px;top:1018px;width:36px;height:24px"></div>
<div class="t" style="left:1398px;top:1018px;width:36px;height:24px;font-size:12.3px;line-height:24px;text-align:center;color:#000">0</div>
<div class="sel" style="left:1435px;top:1018px;width:38px;height:24px"></div>
<div class="t" style="left:1435px;top:1018px;width:38px;height:24px;font-size:12.3px;line-height:24px;text-align:center;color:#000">DC</div>
<div class="btn" style="left:1477px;top:1018px;width:30px;height:24px"></div>
<div class="btn" style="left:1557px;top:1018px;width:59px;height:24px"></div>
<div class="t" style="left:1557px;top:1018px;width:59px;height:24px;font-size:12.3px;line-height:24px;text-align:center;color:#000">Одн</div>
<div class="btn" style="left:1618px;top:1018px;width:65px;height:24px"></div>
<div class="t" style="left:1618px;top:1018px;width:65px;height:24px;font-size:12.3px;line-height:24px;text-align:center;color:#000">Норм</div>
<div class="btn" style="left:1686px;top:1018px;width:53px;height:24px"></div>
<div class="t" style="left:1686px;top:1018px;width:53px;height:24px;font-size:12.3px;line-height:24px;text-align:center;color:#000">Авто</div>
<div class="sel" style="left:1742px;top:1018px;width:54px;height:24px"></div>
<div class="t" style="left:1742px;top:1018px;width:54px;height:24px;font-size:12.3px;line-height:24px;text-align:center;color:#000">Нет</div>
<div class="a" style="left:1328.5px;top:1022.5px;width:15px;height:15px;border-radius:50%;background:#cccccc;border:2px solid #fff;box-shadow:0 0 0 1px #d4d4d4"></div>
<div class="a" style="left:1529.5px;top:1022.5px;width:15px;height:15px;border-radius:50%;background:#cccccc;border:2px solid #fff;box-shadow:0 0 0 1px #d4d4d4"></div>
<div class="a" style="left:-10px;top:630px;width:307px;height:349px;background:#f0f0f0;border:1px solid #9a9a9a;box-shadow:0 0 10px 2px rgba(0,0,0,0.2)"></div>
<div class="a" style="left:0px;top:631px;width:295px;height:37px;background:#fff"></div>
<div class="t" style="right:1708px;top:642.5px;font-size:14.8px;color:#9b9b9b">Функциональный генератор-XFG1</div>
<svg class="a" style="left:268px;top:642px;" width="14" height="14" viewBox="0 0 14 14"><path d="M1 1L13 13M13 1L1 13" stroke="#555" stroke-width="1.1"/></svg>
<div class="t" style="right:1851px;top:672.4px;font-size:12.3px;background:#f0f0f0;padding:0 3px">Форма сигнала</div>
<div class="a" style="left:70px;top:678px;width:221px;height:1px;background:#dcdcdc"></div>
<div class="a" style="left:290px;top:678px;width:1px;height:190px;background:#dcdcdc"></div>
<div class="sel" style="left:-5px;top:691px;width:85px;height:20px"></div>
<svg class="a" style="left:0px;top:690px;" width="80" height="20" viewBox="0 0 80 20"><path d="M3 10C7 6 11 6 15 8S26 14 31 14S42 8 50 7S57 9 59 10" fill="none" stroke="#000" stroke-width="1.2"/></svg>
<div class="btn" style="left:84px;top:691px;width:98px;height:20px"></div>
<div class="btn" style="left:185px;top:691px;width:98px;height:20px"></div>
<svg class="a" style="left:0px;top:690px;" width="300" height="20" viewBox="0 0 300 20"><path d="M104 14L115.6 9 128.6 14 140.4 8 152 13 160.5 10.5" fill="none" stroke="#000" stroke-width="1.2"/><path d="M205.3 14H216V7H227.8V14H238.4V7H249V14H262" fill="none" stroke="#000" stroke-width="1.3"/></svg>
<div class="t" style="left:-24px;top:716px;font-size:12.3px;background:#f0f0f0;padding:0 3px">Параметры сигнала</div>
<div class="a" style="left:96px;top:722px;width:195px;height:1px;background:#dcdcdc"></div>
<div class="t" style="left:0.00px;top:740.61px;font-size:12.3px;">стота</div>
<div class="a" style="left:76px;top:734px;width:166px;height:24px;background:#fff;border:2px solid #7a7a7a"></div>
<div class="a" style="left:240px;top:734px;width:46px;height:24px;background:#fff;border:2px solid #7a7a7a"></div>
<div class="t" style="left:82.00px;top:740.61px;font-size:12.3px;">50</div>
<div class="t" style="left:246.00px;top:739.61px;font-size:12.3px;">kHz</div>
<div class="t" style="left:0.00px;top:764.61px;font-size:12.3px;">ительность</div>
<div class="a" style="left:76px;top:758px;width:166px;height:24px;background:#f0f0f0;border:2px solid #dcdcdc"></div>
<div class="a" style="left:241px;top:758px;width:45px;height:24px;background:#f0f0f0;border:2px solid #dcdcdc"></div>
<div class="t" style="left:82.00px;top:764.61px;font-size:12.3px;color:#8c8c8c">50</div>
<div class="t" style="left:250.00px;top:763.61px;font-size:12.3px;color:#8c8c8c">%</div>
<div class="t" style="left:0.00px;top:788.61px;font-size:12.3px;">плитуда</div>
<div class="a" style="left:76px;top:782px;width:166px;height:24px;background:#fff;border:2px solid #7a7a7a"></div>
<div class="a" style="left:240px;top:782px;width:46px;height:24px;background:#fff;border:2px solid #7a7a7a"></div>
<div class="t" style="left:82.00px;top:788.61px;font-size:12.3px;">500</div>
<div class="t" style="left:246.00px;top:787.61px;font-size:12.3px;">mVp</div>
<div class="t" style="left:0.00px;top:812.61px;font-size:12.3px;">ещение</div>
<div class="a" style="left:76px;top:806px;width:166px;height:24px;background:#fff;border:2px solid #7a7a7a"></div>
<div class="a" style="left:240px;top:806px;width:46px;height:24px;background:#fff;border:2px solid #7a7a7a"></div>
<div class="t" style="left:82.00px;top:812.61px;font-size:12.3px;">0</div>
<div class="t" style="left:250.00px;top:811.61px;font-size:12.3px;">V</div>
<div class="dis" style="left:42px;top:837px;width:173px;height:25px"></div>
<div class="t" style="left:42px;top:837px;width:173px;height:25px;font-size:12.3px;line-height:25px;text-align:center;color:#8c8c8c">Фронт/Спад</div>
<div class="a" style="left:0px;top:867px;width:291px;height:1px;background:#dcdcdc"></div>
<div class="t" style="left:62.00px;top:934.61px;font-size:12.3px;">Общий</div>
<div class="a" style="left:71.5px;top:952.5px;width:15px;height:15px;border-radius:50%;background:#cccccc;border:2px solid #fff;box-shadow:0 0 0 1px #d4d4d4"></div>
<div class="a" style="left:254.5px;top:954.5px;width:15px;height:15px;border-radius:50%;background:#fff;border:2px solid #fff;box-shadow:0 0 0 1px #d4d4d4"></div>
<div class="a" style="left:-9.5px;top:952.5px;width:15px;height:15px;border-radius:50%;background:#fff;border:2px solid #fff;box-shadow:0 0 0 1px #d4d4d4"></div>
<div class="t" style="left:258.00px;top:940.61px;font-size:12.3px;">−</div>
<svg class="a" style="left:284px;top:966px;" width="12" height="12" viewBox="0 0 12 12"><g fill="#c0c0c0"><rect x="9" y="1" width="2" height="2"/><rect x="6" y="4" width="2" height="2"/><rect x="9" y="4" width="2" height="2"/><rect x="3" y="7" width="2" height="2"/><rect x="6" y="7" width="2" height="2"/><rect x="9" y="7" width="2" height="2"/></g></svg>
<div class="a" style="left:1104px;top:60px;width:812px;height:333px;background:#f0f0f0;border:1px solid #8c8c8c;box-shadow:0 0 10px 2px rgba(0,0,0,0.22)"></div>
<div class="a" style="left:1105px;top:61px;width:810px;height:37px;background:#fff"></div>
<div class="t" style="left:1115.00px;top:72.69px;font-size:14.1px;">Плоттер Боде-XBP1</div>
<svg class="a" style="left:1887px;top:72px;" width="14" height="14" viewBox="0 0 14 14"><path d="M1 1L13 13M13 1L1 13" stroke="#000" stroke-width="1.1"/></svg>
<div class="a" style="left:1106px;top:100px;width:522px;height:266px;background:#6e6e6e"></div>
<div class="a" style="left:1107px;top:101px;width:520px;height:264px;background:#fff"></div>
<div class="a" style="left:1107px;top:101px;width:518px;height:262px;background:#a0a0a0"></div>
<div class="a" style="left:1108px;top:102px;width:517px;height:261px;background:#5a5a5a"></div>
<div class="a" style="left:1109px;top:103px;width:516px;height:260px;background:#000"></div>
<svg class="a" style="left:0px;top:0px;" width="1920" height="400" viewBox="0 0 1920 400"><line x1="1117.5" y1="107.5" x2="1117.5" y2="355.5" stroke="#fff"/><line x1="1159.5" y1="107.5" x2="1159.5" y2="355.5" stroke="#e0e0e0" stroke-dasharray="3 3"/><line x1="1201.5" y1="107.5" x2="1201.5" y2="355.5" stroke="#e0e0e0" stroke-dasharray="3 3"/><line x1="1243.5" y1="107.5" x2="1243.5" y2="355.5" stroke="#e0e0e0" stroke-dasharray="3 3"/><line x1="1285.5" y1="107.5" x2="1285.5" y2="355.5" stroke="#e0e0e0" stroke-dasharray="3 3"/><line x1="1327.5" y1="107.5" x2="1327.5" y2="355.5" stroke="#e0e0e0" stroke-dasharray="3 3"/><line x1="1369.5" y1="107.5" x2="1369.5" y2="355.5" stroke="#e0e0e0" stroke-dasharray="3 3"/><line x1="1412.5" y1="107.5" x2="1412.5" y2="355.5" stroke="#e0e0e0" stroke-dasharray="3 3"/><line x1="1454.5" y1="107.5" x2="1454.5" y2="355.5" stroke="#e0e0e0" stroke-dasharray="3 3"/><line x1="1496.5" y1="107.5" x2="1496.5" y2="355.5" stroke="#e0e0e0" stroke-dasharray="3 3"/><line x1="1538.5" y1="107.5" x2="1538.5" y2="355.5" stroke="#e0e0e0" stroke-dasharray="3 3"/><line x1="1580.5" y1="107.5" x2="1580.5" y2="355.5" stroke="#e0e0e0" stroke-dasharray="3 3"/><line x1="1622.5" y1="107.5" x2="1622.5" y2="355.5" stroke="#e0e0e0" stroke-dasharray="3 3"/><line x1="1117.5" y1="107.5" x2="1622.5" y2="107.5" stroke="#e0e0e0" stroke-dasharray="3 3"/><line x1="1117.5" y1="169.5" x2="1622.5" y2="169.5" stroke="#e0e0e0" stroke-dasharray="3 3"/><line x1="1117.5" y1="231.5" x2="1622.5" y2="231.5" stroke="#e0e0e0" stroke-dasharray="3 3"/><line x1="1117.5" y1="293.5" x2="1622.5" y2="293.5" stroke="#e0e0e0" stroke-dasharray="3 3"/><line x1="1117.5" y1="355.5" x2="1622.5" y2="355.5" stroke="#fff"/><polyline points="1117,231.5 1437,231.5 1455,233 1478,238 1501,241.5 1525,241.5 1535,239 1544,237.3 1566,237.3 1591,241.5 1610,245 1622,248" fill="none" stroke="#ff8000" stroke-width="1.2"/><line x1="1436.5" y1="103" x2="1436.5" y2="355" stroke="#20d8e0" stroke-width="1.5"/><polygon points="1431.5,102 1441.5,102 1436.5,108" fill="#20d8e0"/><circle cx="1436.5" cy="231.5" r="3" fill="none" stroke="#20d8e0"/></svg>
<div class="btn" style="left:1107px;top:369px;width:74px;height:18px"></div>
<svg class="a" style="left:1136px;top:372px;" width="16" height="12" viewBox="0 0 16 12"><path d="M1 6l7-5v3h7v4h-7v3z" fill="#000"/></svg>
<div class="a" style="left:1183px;top:369px;width:183px;height:18px;background:#f0f0f0;border:1px solid;border-color:#c8c8c8 #fff #fff #c8c8c8"></div>
<div class="t" style="left:1204.50px;top:371.61px;font-size:12.3px;">39.377 kHz</div>
<div class="a" style="left:1367px;top:369px;width:183px;height:18px;background:#f0f0f0;border:1px solid;border-color:#c8c8c8 #fff #fff #c8c8c8"></div>
<div class="t" style="left:1388.00px;top:371.61px;font-size:12.3px;">-2.936 Deg</div>
<div class="btn" style="left:1552px;top:369px;width:75px;height:18px"></div>
<svg class="a" style="left:1580px;top:372px;" width="16" height="12" viewBox="0 0 16 12"><path d="M15 6l-7-5v3h-7v4h7v3z" fill="#000"/></svg>
<div class="grp" style="left:1632px;top:106px;width:276px;height:200px"></div>
<div class="t" style="left:1637px;top:100.5px;padding:0 3px;font-size:12.3px;background:#f0f0f0">Режим</div>
<div class="btn" style="left:1660px;top:121px;width:110px;height:22px"></div>
<div class="t" style="left:1660px;top:121px;width:110px;height:22px;font-size:12.3px;line-height:22px;text-align:center;color:#000">Амплитуда</div>
<div class="sel" style="left:1774px;top:121px;width:110px;height:22px"></div>
<div class="t" style="left:1774px;top:121px;width:110px;height:22px;font-size:12.3px;line-height:22px;text-align:center;color:#000">Фаза</div>
<div class="a" style="left:1633px;top:158px;width:4px;height:1px;background:#dcdcdc"></div>
<div class="t" style="left:1640px;top:153px;font-size:12.3px">По горизонтали</div>
<div class="a" style="left:1733px;top:158px;width:37px;height:1px;background:#dcdcdc"></div>
<div class="a" style="left:1770px;top:158px;width:1px;height:107px;background:#dcdcdc"></div>
<div class="t" style="left:1779px;top:153px;font-size:12.3px">По вертикали</div>
<div class="a" style="left:1862px;top:158px;width:45px;height:1px;background:#dcdcdc"></div>
<div class="a" style="left:1633px;top:264px;width:4px;height:1px;background:#dcdcdc"></div>
<div class="t" style="left:1640px;top:259px;font-size:12.3px;background:#f0f0f0;padding-right:4px">Управление</div>
<div class="a" style="left:1712px;top:264px;width:195px;height:1px;background:#dcdcdc"></div>
<div class="sel" style="left:1648px;top:175px;width:51px;height:22px"></div>
<div class="t" style="left:1648px;top:175px;width:51px;height:22px;font-size:12.3px;line-height:22px;text-align:center;color:#000">Log</div>
<div class="btn" style="left:1702px;top:175px;width:51px;height:22px"></div>
<div class="t" style="left:1702px;top:175px;width:51px;height:22px;font-size:12.3px;line-height:22px;text-align:center;color:#000">Лин</div>
<div class="dis" style="left:1788px;top:175px;width:51px;height:22px"></div>
<div class="t" style="left:1788px;top:175px;width:51px;height:22px;font-size:12.3px;line-height:22px;text-align:center;color:#8c8c8c">Log</div>
<div class="sel" style="left:1842px;top:175px;width:51px;height:22px"></div>
<div class="t" style="left:1842px;top:175px;width:51px;height:22px;font-size:12.3px;line-height:22px;text-align:center;color:#000">Лин</div>
<div class="a" style="left:1647px;top:200px;width:116px;height:48px;background:#fff;border:2px solid #888"></div>
<div class="a" style="left:1719px;top:200px;width:2px;height:48px;background:#888"></div>
<div class="a" style="left:1647px;top:223px;width:116px;height:2px;background:#888"></div>
<div class="t" style="left:1653.00px;top:206.11px;font-size:12.3px;">1</div>
<div class="t" style="left:1724.00px;top:204.61px;font-size:12.3px;">GHz</div>
<div class="t" style="left:1653.00px;top:230.11px;font-size:12.3px;">1</div>
<div class="t" style="left:1724.00px;top:228.61px;font-size:12.3px;">mHz</div>
<div class="t" style="left:1636.00px;top:206.61px;font-size:12.3px;">F</div>
<div class="t" style="left:1637.00px;top:234.61px;font-size:12.3px;">I</div>
<div class="a" style="left:1787px;top:200px;width:116px;height:48px;background:#fff;border:2px solid #888"></div>
<div class="a" style="left:1859px;top:200px;width:2px;height:48px;background:#888"></div>
<div class="a" style="left:1787px;top:223px;width:116px;height:2px;background:#888"></div>
<div class="t" style="left:1793.00px;top:206.11px;font-size:12.3px;">720</div>
<div class="t" style="left:1868.00px;top:204.61px;font-size:12.3px;">Deg</div>
<div class="t" style="left:1793.00px;top:230.11px;font-size:12.3px;">-720</div>
<div class="t" style="left:1868.00px;top:228.61px;font-size:12.3px;">Deg</div>
<div class="t" style="left:1776.00px;top:206.61px;font-size:12.3px;">F</div>
<div class="t" style="left:1777.00px;top:234.61px;font-size:12.3px;">I</div>
<div class="btn" style="left:1659px;top:279px;width:71px;height:22px"></div>
<div class="t" style="left:1659px;top:279px;width:71px;height:22px;font-size:12.3px;line-height:22px;text-align:center;color:#000">Экран</div>
<div class="btn" style="left:1734px;top:279px;width:71px;height:22px"></div>
<div class="t" style="left:1734px;top:279px;width:71px;height:22px;font-size:12.3px;line-height:22px;text-align:center;color:#000">Сохранить</div>
<div class="btn" style="left:1809px;top:279px;width:72px;height:22px"></div>
<div class="t" style="left:1809px;top:279px;width:72px;height:22px;font-size:12.3px;line-height:22px;text-align:center;color:#000">Уст...</div>
<div class="t" style="left:1657.50px;top:374.11px;font-size:12.3px;">+</div>
<div class="t" style="left:1696.00px;top:374.11px;font-size:12.3px;">Вх</div>
<div class="t" style="left:1742.00px;top:373.11px;font-size:12.3px;">−</div>
<div class="t" style="left:1787.00px;top:374.11px;font-size:12.3px;">+</div>
<div class="t" style="left:1822.00px;top:374.11px;font-size:12.3px;">Вых</div>
<div class="t" style="left:1873.00px;top:373.11px;font-size:12.3px;">−</div>
<div class="a" style="left:1668.5px;top:372.5px;width:15px;height:15px;border-radius:50%;background:#cccccc;border:2px solid #fff;box-shadow:0 0 0 1px #d4d4d4"></div>
<div class="a" style="left:1719.5px;top:372.5px;width:15px;height:15px;border-radius:50%;background:#cccccc;border:2px solid #fff;box-shadow:0 0 0 1px #d4d4d4"></div>
<div class="a" style="left:1798.5px;top:372.5px;width:15px;height:15px;border-radius:50%;background:#cccccc;border:2px solid #fff;box-shadow:0 0 0 1px #d4d4d4"></div>
<div class="a" style="left:1850.5px;top:372.5px;width:15px;height:15px;border-radius:50%;background:#cccccc;border:2px solid #fff;box-shadow:0 0 0 1px #d4d4d4"></div>
<svg class="a" style="left:1900px;top:378px;" width="12" height="12" viewBox="0 0 12 12"><g fill="#c0c0c0"><rect x="9" y="1" width="2" height="2"/><rect x="6" y="4" width="2" height="2"/><rect x="9" y="4" width="2" height="2"/><rect x="3" y="7" width="2" height="2"/><rect x="6" y="7" width="2" height="2"/><rect x="9" y="7" width="2" height="2"/></g></svg>
<div class="a" style="left:0;top:1030px;width:1920px;height:50px;background:linear-gradient(90deg,#1c1f22 0%,#1e2022 12%,#242220 22%,#342a23 29%,#2f252a 34%,#36291f 40%,#32271f 47%,#2d2925 52%,#2c2e23 55%,#252523 60%,#2d2e23 65%,#2a2a24 69%,#2b2727 75%,#322c27 81%,#332c26 100%)"></div>
<div class="a" style="left:65px;top:1031px;width:59px;height:48px;background:rgba(255,255,235,0.2);border:1px solid rgba(255,255,250,0.38)"></div>
<div class="a" style="left:127px;top:1031px;width:59px;height:48px;background:rgba(255,255,235,0.2);border:1px solid rgba(255,255,250,0.38)"></div>
<div class="a" style="left:437px;top:1031px;width:59px;height:48px;background:rgba(255,255,235,0.2);border:1px solid rgba(255,255,250,0.38)"></div>
<div class="a" style="left:499px;top:1031px;width:59px;height:48px;background:rgba(255,255,235,0.3);border:1px solid rgba(255,255,250,0.38)"></div>
<svg class="a" style="left:16px;top:1043px;" width="26" height="26" viewBox="0 0 26 26"><path d="M1 4l10-1.5v10h-10zM12.5 2.3l12.5-1.8v12h-12.5zM1 13.5h10v10l-10-1.5zM12.5 13.5h12.5v12l-12.5-1.8z" fill="#fff"/></svg>
<svg class="a" style="left:78px;top:1039px;" width="32" height="32" viewBox="0 0 32 32"><defs><linearGradient id="eg1" x1="0" y1="0" x2="1" y2="0.6"><stop offset="0" stop-color="#35c4f5"/><stop offset="0.55" stop-color="#2fc0b0"/><stop offset="1" stop-color="#6ae050"/></linearGradient><linearGradient id="eg2" x1="0" y1="0" x2="0.6" y2="1"><stop offset="0" stop-color="#1f9ae8"/><stop offset="1" stop-color="#0d50a0"/></linearGradient></defs><circle cx="16" cy="16" r="15" fill="url(#eg1)"/><path d="M1 17C1 9 9 5 16 8.5C10 11 8 17 10.5 21.5C13 26 22 27 28 21.5C26 28 20 31 15 31C7 31 1 25 1 17Z" fill="url(#eg2)"/><path d="M28 21.5C22 27 13 26 10.5 21.5C14 24 24 24 28 21.5Z" fill="#0b4a98"/><circle cx="16.5" cy="16" r="4.3" fill="#4c4b46"/></svg>
<svg class="a" style="left:141px;top:1042px;" width="30" height="26" viewBox="0 0 30 26"><path d="M2 4h9l2 3h15v17h-26z" fill="#ffb900"/><path d="M2 10h26v14h-26z" fill="#ffd75e"/><rect x="9" y="15" width="12" height="9" fill="#3a96dd"/><rect x="12" y="18" width="6" height="6" fill="#ffd75e"/></svg>
<svg class="a" style="left:203px;top:1041px;" width="30" height="30" viewBox="0 0 30 30"><path d="M9 9q0-6 6-6t6 6" fill="none" stroke="#3a96dd" stroke-width="2"/><rect x="3" y="8" width="24" height="20" rx="3" fill="#f3f3f3"/><rect x="9" y="13" width="5.5" height="5.5" fill="#f25022"/><rect x="15.5" y="13" width="5.5" height="5.5" fill="#7fba00"/><rect x="9" y="19.5" width="5.5" height="5.5" fill="#00a4ef"/><rect x="15.5" y="19.5" width="5.5" height="5.5" fill="#ffb900"/></svg>
<svg class="a" style="left:265px;top:1040px;" width="32" height="30" viewBox="0 0 32 30"><path d="M12 5h14l4 6v14h-18z" fill="#28a8ea"/><path d="M14 13l16-2v14h-16z" fill="#0a64c8"/><rect x="3" y="9" width="15" height="15" rx="2" fill="#0f6cbd"/><text x="10.5" y="21" text-anchor="middle" font-size="12" font-weight="bold" font-family="Liberation Sans" fill="#fff">O</text></svg>
<svg class="a" style="left:329px;top:1040px;" width="26" height="30" viewBox="0 0 26 30"><rect x="2" y="1" width="22" height="28" rx="2" fill="#4b5560"/><rect x="5" y="4" width="16" height="5" fill="#5cc8f0"/><g fill="#d0d8e0"><rect x="5" y="11" width="4" height="4"/><rect x="11" y="11" width="4" height="4"/><rect x="5" y="17" width="4" height="4"/><rect x="11" y="17" width="4" height="4"/><rect x="5" y="23" width="4" height="4"/><rect x="11" y="23" width="4" height="4"/></g><rect x="17" y="11" width="4" height="16" fill="#1f6fc0"/></svg>
<svg class="a" style="left:388px;top:1039px;" width="32" height="32" viewBox="0 0 32 32"><path d="M4 18q0-12 13-12 9 0 9 7 0 5-6 4-4 0-3 4 1 5-5 5-8 0-8-8z" fill="#d9c7a6"/><circle cx="9" cy="15" r="2.2" fill="#e04040"/><circle cx="13" cy="10" r="2.2" fill="#40a040"/><circle cx="18" cy="10" r="2.2" fill="#4060e0"/><path d="M28 3l-10 14" stroke="#e0a040" stroke-width="3"/></svg>
<svg class="a" style="left:451px;top:1041px;" width="30" height="30" viewBox="0 0 30 30"><circle cx="15" cy="15" r="13.5" fill="#db4437"/><path d="M15 15L3.3 8.2A13.5 13.5 0 0 0 15 28.5z" fill="#0f9d58"/><path d="M15 15l0 13.5A13.5 13.5 0 0 0 28.5 15 13.5 13.5 0 0 0 26.7 8.2z" fill="#ffcd40"/><path d="M15 15L3.3 8.2 A13.5 13.5 0 0 1 26.7 8.2z" fill="#db4437"/><circle cx="15" cy="15" r="6.5" fill="#fff"/><circle cx="15" cy="15" r="5" fill="#4285f4"/></svg>
<svg class="a" style="left:513px;top:1040px;" width="30" height="30" viewBox="0 0 30 30"><defs><linearGradient id="ai2" x1="0" y1="0" x2="0.3" y2="1"><stop offset="0" stop-color="#6a68b0"/><stop offset="0.5" stop-color="#2c2a88"/><stop offset="1" stop-color="#6a68a8"/></linearGradient></defs><rect x="1" y="2" width="28" height="27" rx="4" fill="url(#ai2)"/><path d="M2 6h19M3 10h16M2 14h19" stroke="#e8e8f8" stroke-width="1.5"/><path d="M20 8.5h8M21 12.5h7" stroke="#f0c060" stroke-width="1.6"/><path d="M2 19h8M2 23h9" stroke="#f0c060" stroke-width="1.6"/><path d="M14 18v9M18 20v7M22 18v9" stroke="#c0c0e8" stroke-width="1.8"/></svg>
<svg class="a" style="left:1601px;top:1047px;" width="16" height="12" viewBox="0 0 16 12"><path d="M2 9l6-6 6 6" fill="none" stroke="#fff" stroke-width="1.3"/></svg>
<svg class="a" style="left:1632px;top:1045px;" width="18" height="20" viewBox="0 0 18 20"><rect x="2" y="5" width="10" height="9" rx="1" fill="none" stroke="#fff" stroke-width="1.2"/><path d="M12 8l4-2v8l-4-2" fill="none" stroke="#fff" stroke-width="1.2"/><path d="M3 2q5-2 9 0M3 17q5 2 9 0" fill="none" stroke="#fff"/></svg>
<svg class="a" style="left:1661px;top:1045px;" width="20" height="20" viewBox="0 0 20 20"><path d="M2 17q2-10 14-13M5 17q2-7 10-9M8 17q1-4 6-5" fill="none" stroke="#fff" stroke-width="1.2"/><circle cx="15" cy="16" r="1.5" fill="#fff"/></svg>
<svg class="a" style="left:1689px;top:1045px;" width="24" height="20" viewBox="0 0 24 20"><path d="M2 7h4l5-4v14l-5-4h-4z" fill="none" stroke="#fff" stroke-width="1.2"/><path d="M14 7q2 3 0 6M17 5q3 5 0 10M20 3q4 7 0 14" fill="none" stroke="#fff" stroke-width="1.2"/></svg>
<div class="t" style="left:1724.50px;top:1049.51px;font-size:13.6px;color:#fff">РУС</div>
<div class="t" style="left:1785.00px;top:1037.50px;font-size:14.2px;color:#fff">22:46</div>
<div class="t" style="left:1768.00px;top:1059.50px;font-size:14.2px;color:#fff">01.06.2025</div>
<svg class="a" style="left:1860px;top:1044px;" width="24" height="22" viewBox="0 0 24 22"><path d="M2.5 2.5h19v14h-8l-3 3-3-3h-5z" fill="none" stroke="#fff" stroke-width="1.2"/></svg>
</body></html>
